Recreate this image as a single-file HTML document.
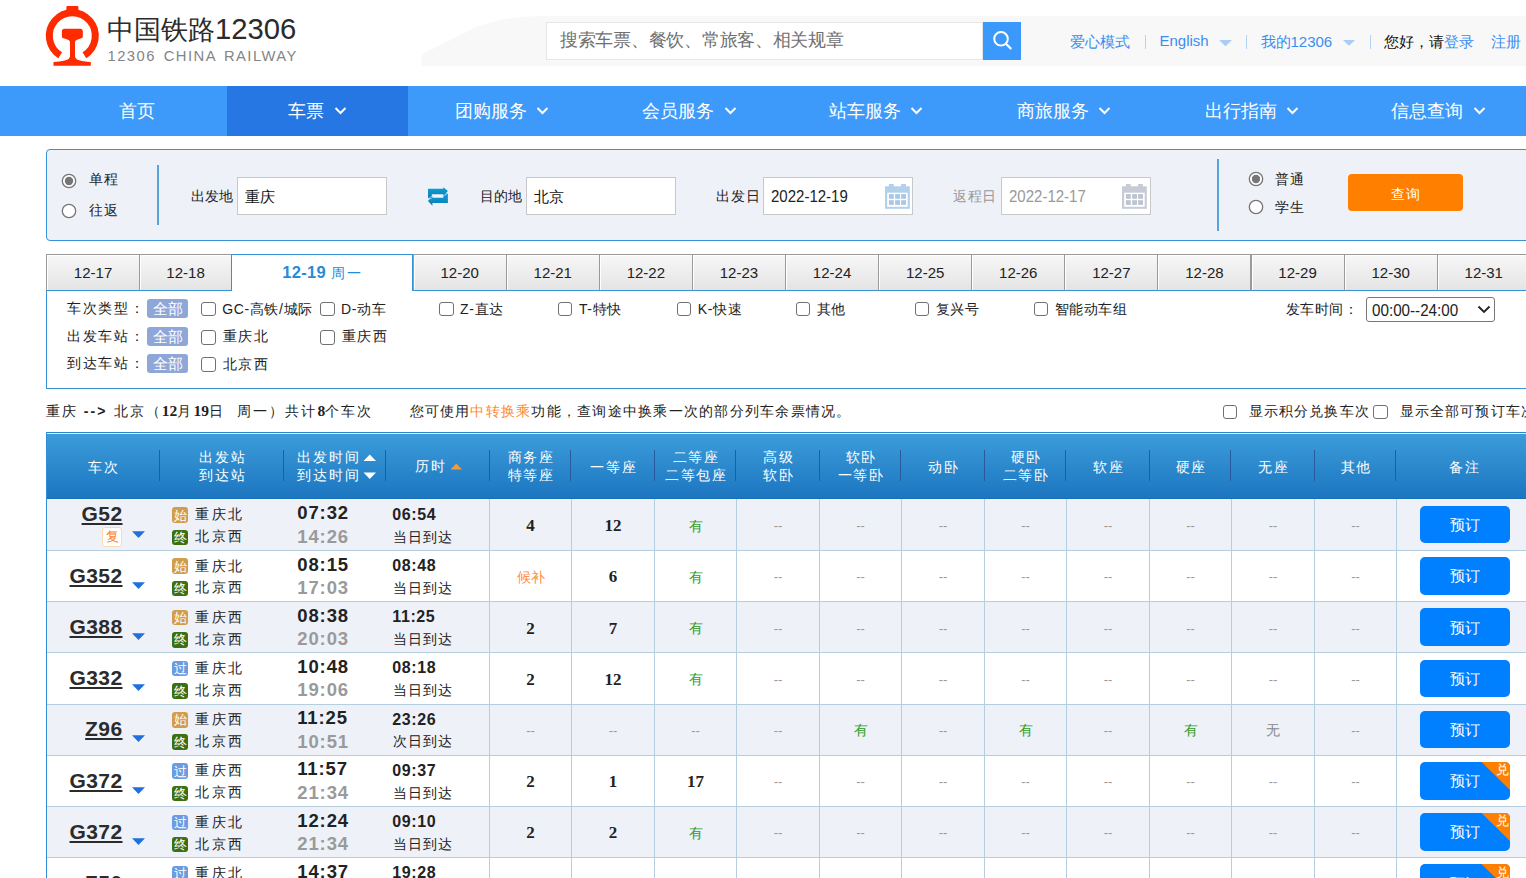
<!DOCTYPE html><html><head><meta charset="utf-8"><style>
html,body{margin:0;padding:0;background:#fff;}
body{width:1526px;height:878px;position:relative;overflow:hidden;font-family:"Liberation Sans",sans-serif;}
.t{position:absolute;white-space:nowrap;}
.b{position:absolute;box-sizing:border-box;}
.sb{font-family:'Liberation Serif',serif;font-size:15.5px;letter-spacing:0;}
svg{position:absolute;}
</style></head><body>
<svg style="left:40px;top:0px" width="64" height="70" viewBox="40 0 64 70">
<path d="M 60.2 55.2 A 23 23 0 1 1 84.4 55.2" fill="none" stroke="#fe2a00" stroke-width="7"/>
<rect x="66.4" y="6" width="12" height="6" rx="1" fill="#fe2a00"/>
<path d="M 64.5 28.7 H 80.3 Q 82.8 28.7 82.8 31.2 V 36.8 Q 82.8 38.2 80.5 38.6 Q 75.5 39.8 75 42 V 56.5 Q 75.5 60 82 61 Q 88 62 90.8 62 V 65.8 H 53.5 V 62 Q 56.5 62 62.5 61 Q 69.5 60 70 56.5 V 42 Q 69.5 39.8 64.5 38.6 Q 61.9 38.2 61.9 36.8 V 31.2 Q 61.9 28.7 64.5 28.7 Z" fill="#fe2a00"/>
</svg>
<div class="t" style="left:107.0px;top:14.8px;font-size:27px;line-height:27px;color:#2b2b2b;font-weight:normal;letter-spacing:0px;font-family:'Liberation Sans',sans-serif;">中国铁路<span style="font-size:30px;display:inline-block;transform:scaleX(0.975);transform-origin:left center;">12306</span></div>
<div class="t" style="left:107.5px;top:48.6px;font-size:14.8px;line-height:14.8px;color:#858585;font-weight:normal;letter-spacing:1.45px;font-family:'Liberation Sans',sans-serif;word-spacing:2.2px;">12306 CHINA RAILWAY</div>
<svg style="left:0;top:0" width="1526" height="80"><path d="M 421.5 66 L 421 59 Q 421.5 53 431 49.8 L 476 27.3 Q 498 17.5 540 16 L 1526 16 L 1526 66 Z" fill="#f8f8f8"/></svg>
<div class="b" style="left:546.0px;top:22.0px;width:437.0px;height:38.0px;background:#fff;border:1px solid #e6e6e6;"></div>
<div class="t" style="left:560.0px;top:32.2px;font-size:17.5px;line-height:17.5px;color:#707070;font-weight:normal;letter-spacing:-0.27px;font-family:'Liberation Sans',sans-serif;">搜索车票、餐饮、常旅客、相关规章</div>
<div class="b" style="left:983.0px;top:22.0px;width:38.0px;height:38.0px;background:#3b99fc;"></div>
<svg style="left:983px;top:22px" width="38" height="38"><circle cx="18" cy="16.8" r="6.8" fill="none" stroke="#fff" stroke-width="2"/><line x1="22.9" y1="21.7" x2="27.6" y2="26.4" stroke="#fff" stroke-width="2.2" stroke-linecap="round"/></svg>
<div class="t" style="left:1070.0px;top:33.6px;font-size:15px;line-height:15px;color:#3b8ef0;font-weight:normal;letter-spacing:0px;font-family:'Liberation Sans',sans-serif;">爱心模式</div>
<div class="b" style="left:1145.0px;top:35.0px;width:1.2px;height:13.6px;background:#b4d3f6;"></div>
<div class="t" style="left:1159.5px;top:32.6px;font-size:15px;line-height:15px;color:#3b8ef0;font-weight:normal;letter-spacing:0px;font-family:'Liberation Sans',sans-serif;">English</div>
<svg style="left:1219px;top:40px" width="14" height="7"><path d="M0 0 H13 L6.5 6.2 Z" fill="#a9cdf6"/></svg>
<div class="b" style="left:1246.0px;top:35.0px;width:1.2px;height:13.6px;background:#b4d3f6;"></div>
<div class="t" style="left:1260.5px;top:33.6px;font-size:15px;line-height:15px;color:#3b8ef0;font-weight:normal;letter-spacing:0px;font-family:'Liberation Sans',sans-serif;">我的12306</div>
<svg style="left:1343px;top:40px" width="14" height="7"><path d="M0 0 H12 L6 5.8 Z" fill="#a9cdf6"/></svg>
<div class="b" style="left:1370.0px;top:35.0px;width:1.2px;height:13.6px;background:#b4d3f6;"></div>
<div class="t" style="left:1384.0px;top:34.5px;font-size:14.6px;line-height:14.6px;color:#111;font-weight:normal;letter-spacing:0px;font-family:'Liberation Sans',sans-serif;">您好，请<span style="color:#3b8ef0">登录</span></div>
<div class="t" style="left:1490.5px;top:34.5px;font-size:14.6px;line-height:14.6px;color:#3b8ef0;font-weight:normal;letter-spacing:0px;font-family:'Liberation Sans',sans-serif;">注册</div>
<div class="b" style="left:0.0px;top:86.0px;width:1526.0px;height:50.0px;background:#3d9afa;"></div>
<div class="b" style="left:227.0px;top:86.0px;width:181.0px;height:50.0px;background:#2676e3;"></div>
<div class="t" style="left:119.4px;top:101.7px;font-size:18px;line-height:18px;color:#fff;font-weight:normal;letter-spacing:0px;font-family:'Liberation Sans',sans-serif;">首页</div>
<div class="t" style="left:288.1px;top:101.7px;font-size:18px;line-height:18px;color:#fff;font-weight:normal;letter-spacing:0px;font-family:'Liberation Sans',sans-serif;">车票</div>
<svg style="left:334.1px;top:106px" width="14" height="10"><path d="M1.5 2 L6.5 7 L11.5 2" fill="none" stroke="#fff" stroke-width="2"/></svg>
<div class="t" style="left:454.6px;top:101.7px;font-size:18px;line-height:18px;color:#fff;font-weight:normal;letter-spacing:0px;font-family:'Liberation Sans',sans-serif;">团购服务</div>
<svg style="left:535.8px;top:106px" width="14" height="10"><path d="M1.5 2 L6.5 7 L11.5 2" fill="none" stroke="#fff" stroke-width="2"/></svg>
<div class="t" style="left:642.3px;top:101.7px;font-size:18px;line-height:18px;color:#fff;font-weight:normal;letter-spacing:0px;font-family:'Liberation Sans',sans-serif;">会员服务</div>
<svg style="left:723.5px;top:106px" width="14" height="10"><path d="M1.5 2 L6.5 7 L11.5 2" fill="none" stroke="#fff" stroke-width="2"/></svg>
<div class="t" style="left:829.1px;top:101.7px;font-size:18px;line-height:18px;color:#fff;font-weight:normal;letter-spacing:0px;font-family:'Liberation Sans',sans-serif;">站车服务</div>
<svg style="left:910.3px;top:106px" width="14" height="10"><path d="M1.5 2 L6.5 7 L11.5 2" fill="none" stroke="#fff" stroke-width="2"/></svg>
<div class="t" style="left:1016.7px;top:101.7px;font-size:18px;line-height:18px;color:#fff;font-weight:normal;letter-spacing:0px;font-family:'Liberation Sans',sans-serif;">商旅服务</div>
<svg style="left:1097.9px;top:106px" width="14" height="10"><path d="M1.5 2 L6.5 7 L11.5 2" fill="none" stroke="#fff" stroke-width="2"/></svg>
<div class="t" style="left:1205.2px;top:101.7px;font-size:18px;line-height:18px;color:#fff;font-weight:normal;letter-spacing:0px;font-family:'Liberation Sans',sans-serif;">出行指南</div>
<svg style="left:1286.4px;top:106px" width="14" height="10"><path d="M1.5 2 L6.5 7 L11.5 2" fill="none" stroke="#fff" stroke-width="2"/></svg>
<div class="t" style="left:1391.4px;top:101.7px;font-size:18px;line-height:18px;color:#fff;font-weight:normal;letter-spacing:0px;font-family:'Liberation Sans',sans-serif;">信息查询</div>
<svg style="left:1472.6px;top:106px" width="14" height="10"><path d="M1.5 2 L6.5 7 L11.5 2" fill="none" stroke="#fff" stroke-width="2"/></svg>
<div class="b" style="left:46.0px;top:149.0px;width:1560.0px;height:92.0px;background:#eef1f8;border:1px solid #3592d6;border-radius:4px;"></div>
<svg style="left:61.3px;top:172.5px" width="16" height="16"><circle cx="8" cy="8" r="6.7" fill="#fff" stroke="#767676" stroke-width="1.3"/><circle cx="8" cy="8" r="4.2" fill="#767676"/></svg>
<svg style="left:61.3px;top:202.6px" width="16" height="16"><circle cx="8" cy="8" r="6.7" fill="#fff" stroke="#767676" stroke-width="1.3"/></svg>
<div class="t" style="left:88.5px;top:171.9px;font-size:14px;line-height:14px;color:#222;font-weight:normal;letter-spacing:1px;font-family:'Liberation Sans',sans-serif;">单程</div>
<div class="t" style="left:88.5px;top:202.8px;font-size:14px;line-height:14px;color:#222;font-weight:normal;letter-spacing:1px;font-family:'Liberation Sans',sans-serif;">往返</div>
<div class="b" style="left:157.0px;top:165.0px;width:2.0px;height:60.0px;background:#5aa3da;"></div>
<div class="t" style="left:190.5px;top:189.0px;font-size:14px;line-height:14px;color:#222;font-weight:normal;letter-spacing:0.3px;font-family:'Liberation Sans',sans-serif;">出发地</div>
<div class="b" style="left:237.0px;top:177.0px;width:150.0px;height:38.0px;background:#fff;border:1px solid #c8c8c8;"></div>
<div class="t" style="left:244.5px;top:188.6px;font-size:15px;line-height:15px;color:#111;font-weight:normal;letter-spacing:0px;font-family:'Liberation Sans',sans-serif;">重庆</div>
<svg style="left:427px;top:186px" width="22" height="21" viewBox="0 0 22 21"><defs><linearGradient id="sg" x1="0" y1="0" x2="0" y2="1"><stop offset="0" stop-color="#0aa0d8"/><stop offset="1" stop-color="#0b7db3"/></defs>
<path d="M1 2.8 H16.4 V1.2 L20.9 5.1 L16.4 9.8 V8.3 H4.8 V12.6 L1 12.6 Z" fill="url(#sg)"/>
<path d="M20.9 16.9 H5.4 V19.7 L0.9 14.9 L5.4 10.2 V11.8 H16.4 V7.3 L20.9 7.3 Z" fill="url(#sg)"/>
<path d="M16.4 9.8 L20.9 7.3" stroke="#eef1f8" stroke-width="0.6"/><path d="M4.8 12.6 L1 12.6 L5.4 10.2" fill="none" stroke="#eef1f8" stroke-width="0.5"/></svg>
<div class="t" style="left:479.5px;top:188.5px;font-size:14px;line-height:14px;color:#222;font-weight:normal;letter-spacing:0.3px;font-family:'Liberation Sans',sans-serif;">目的地</div>
<div class="b" style="left:526.0px;top:177.0px;width:150.0px;height:38.0px;background:#fff;border:1px solid #c8c8c8;"></div>
<div class="t" style="left:533.5px;top:188.6px;font-size:15px;line-height:15px;color:#111;font-weight:normal;letter-spacing:0px;font-family:'Liberation Sans',sans-serif;">北京</div>
<div class="t" style="left:716.0px;top:188.8px;font-size:14px;line-height:14px;color:#222;font-weight:normal;letter-spacing:0.9px;font-family:'Liberation Sans',sans-serif;">出发日</div>
<div class="b" style="left:763.0px;top:177.0px;width:150.0px;height:38.0px;background:#fff;border:1px solid #c8c8c8;"></div>
<div class="t" style="left:770.5px;top:188.2px;font-size:16.5px;line-height:16.5px;color:#222;font-weight:normal;letter-spacing:0px;font-family:'Liberation Sans',sans-serif;transform:scaleX(0.91);transform-origin:left center;">2022-12-19</div>
<svg style="left:885px;top:184px" width="25" height="25"><rect x="0" y="2.3" width="24.8" height="22.5" fill="#b1d0ec"/><rect x="3.9" y="0" width="4.8" height="3" fill="#b1d0ec"/><rect x="16.1" y="0" width="4.8" height="3" fill="#b1d0ec"/>
<rect x="2.2" y="8.7" width="20.5" height="14.1" fill="#fff"/><g fill="#a9c8e5"><rect x="3.9" y="10.1" width="4.9" height="4.7"/><rect x="10.1" y="10.1" width="4.9" height="4.7"/><rect x="16.1" y="10.1" width="4.9" height="4.7"/><rect x="3.9" y="16.2" width="4.9" height="4.7"/><rect x="10.1" y="16.2" width="4.9" height="4.7"/><rect x="16.1" y="16.2" width="4.9" height="4.7"/></g></svg>
<div class="t" style="left:953.0px;top:188.8px;font-size:14px;line-height:14px;color:#999;font-weight:normal;letter-spacing:0.6px;font-family:'Liberation Sans',sans-serif;">返程日</div>
<div class="b" style="left:1001.0px;top:177.0px;width:150.0px;height:38.0px;background:#fff;border:1px solid #c8c8c8;"></div>
<div class="t" style="left:1008.5px;top:188.2px;font-size:16.5px;line-height:16.5px;color:#999;font-weight:normal;letter-spacing:0px;font-family:'Liberation Sans',sans-serif;transform:scaleX(0.91);transform-origin:left center;">2022-12-17</div>
<svg style="left:1122px;top:184px" width="25" height="25"><rect x="0" y="2.3" width="24.8" height="22.5" fill="#c6cbd5"/><rect x="3.9" y="0" width="4.8" height="3" fill="#c6cbd5"/><rect x="16.1" y="0" width="4.8" height="3" fill="#c6cbd5"/>
<rect x="2.2" y="8.7" width="20.5" height="14.1" fill="#fff"/><g fill="#bec4cf"><rect x="3.9" y="10.1" width="4.9" height="4.7"/><rect x="10.1" y="10.1" width="4.9" height="4.7"/><rect x="16.1" y="10.1" width="4.9" height="4.7"/><rect x="3.9" y="16.2" width="4.9" height="4.7"/><rect x="10.1" y="16.2" width="4.9" height="4.7"/><rect x="16.1" y="16.2" width="4.9" height="4.7"/></g></svg>
<div class="b" style="left:1217.0px;top:159.0px;width:2.0px;height:72.0px;background:#5aa3da;"></div>
<svg style="left:1247.9px;top:170.5px" width="16" height="16"><circle cx="8" cy="8" r="6.7" fill="#fff" stroke="#767676" stroke-width="1.3"/><circle cx="8" cy="8" r="4.2" fill="#767676"/></svg>
<svg style="left:1247.9px;top:199.4px" width="16" height="16"><circle cx="8" cy="8" r="6.7" fill="#fff" stroke="#767676" stroke-width="1.3"/></svg>
<div class="t" style="left:1274.5px;top:172.2px;font-size:14px;line-height:14px;color:#222;font-weight:normal;letter-spacing:1px;font-family:'Liberation Sans',sans-serif;">普通</div>
<div class="t" style="left:1274.5px;top:200.0px;font-size:14px;line-height:14px;color:#222;font-weight:normal;letter-spacing:1px;font-family:'Liberation Sans',sans-serif;">学生</div>
<div class="b" style="left:1348.0px;top:174.0px;width:115.0px;height:37.0px;background:#ff7f00;border-radius:4px;"></div>
<div class="t" style="left:1305.5px;width:200px;text-align:center;top:186.6px;font-size:14px;line-height:14px;color:#fff;font-weight:normal;letter-spacing:0.3px;text-indent:0.3px;font-family:'Liberation Sans',sans-serif;">查询</div>
<div class="b" style="left:46px;top:290px;width:1500px;height:99px;border:1px solid #3592d6;background:#fff;"></div>
<div class="b" style="left:46.3px;top:254.0px;width:93.5px;height:37.0px;background:linear-gradient(#f7f7f7,#e4e4e4);border:1px solid #9a9a9a;border-bottom:1px solid #3592d6;box-shadow:inset 1px 1px 0 #fff;"></div>
<div class="t" style="left:46.8px;width:92.5px;text-align:center;top:265.2px;font-size:15px;line-height:15px;color:#222;font-weight:normal;letter-spacing:0px;text-indent:0px;font-family:'Liberation Sans',sans-serif;">12-17</div>
<div class="b" style="left:138.8px;top:254.0px;width:93.5px;height:37.0px;background:linear-gradient(#f7f7f7,#e4e4e4);border:1px solid #9a9a9a;border-bottom:1px solid #3592d6;box-shadow:inset 1px 1px 0 #fff;"></div>
<div class="t" style="left:139.3px;width:92.5px;text-align:center;top:265.2px;font-size:15px;line-height:15px;color:#222;font-weight:normal;letter-spacing:0px;text-indent:0px;font-family:'Liberation Sans',sans-serif;">12-18</div>
<div class="b" style="left:231.3px;top:254.0px;width:181.3px;height:37.0px;background:#fff;border:1px solid #3592d6;border-bottom:none;"></div>
<div class="t" style="left:232.0px;width:181.3px;top:262.5px;text-align:center;font-size:16.5px;line-height:18px;color:#2a8ad6;"><b style="letter-spacing:0.3px">12-19</b> <span style="font-size:14px;letter-spacing:2.2px">周一</span></div>
<div class="b" style="left:412.6px;top:254.0px;width:94.1px;height:37.0px;background:linear-gradient(#f7f7f7,#e4e4e4);border:1px solid #9a9a9a;border-bottom:1px solid #3592d6;box-shadow:inset 1px 1px 0 #fff;"></div>
<div class="t" style="left:413.1px;width:93.1px;text-align:center;top:265.2px;font-size:15px;line-height:15px;color:#222;font-weight:normal;letter-spacing:0px;text-indent:0px;font-family:'Liberation Sans',sans-serif;">12-20</div>
<div class="b" style="left:505.7px;top:254.0px;width:94.1px;height:37.0px;background:linear-gradient(#f7f7f7,#e4e4e4);border:1px solid #9a9a9a;border-bottom:1px solid #3592d6;box-shadow:inset 1px 1px 0 #fff;"></div>
<div class="t" style="left:506.2px;width:93.1px;text-align:center;top:265.2px;font-size:15px;line-height:15px;color:#222;font-weight:normal;letter-spacing:0px;text-indent:0px;font-family:'Liberation Sans',sans-serif;">12-21</div>
<div class="b" style="left:598.8px;top:254.0px;width:94.1px;height:37.0px;background:linear-gradient(#f7f7f7,#e4e4e4);border:1px solid #9a9a9a;border-bottom:1px solid #3592d6;box-shadow:inset 1px 1px 0 #fff;"></div>
<div class="t" style="left:599.3px;width:93.1px;text-align:center;top:265.2px;font-size:15px;line-height:15px;color:#222;font-weight:normal;letter-spacing:0px;text-indent:0px;font-family:'Liberation Sans',sans-serif;">12-22</div>
<div class="b" style="left:691.9px;top:254.0px;width:94.1px;height:37.0px;background:linear-gradient(#f7f7f7,#e4e4e4);border:1px solid #9a9a9a;border-bottom:1px solid #3592d6;box-shadow:inset 1px 1px 0 #fff;"></div>
<div class="t" style="left:692.4px;width:93.1px;text-align:center;top:265.2px;font-size:15px;line-height:15px;color:#222;font-weight:normal;letter-spacing:0px;text-indent:0px;font-family:'Liberation Sans',sans-serif;">12-23</div>
<div class="b" style="left:785.0px;top:254.0px;width:94.1px;height:37.0px;background:linear-gradient(#f7f7f7,#e4e4e4);border:1px solid #9a9a9a;border-bottom:1px solid #3592d6;box-shadow:inset 1px 1px 0 #fff;"></div>
<div class="t" style="left:785.5px;width:93.1px;text-align:center;top:265.2px;font-size:15px;line-height:15px;color:#222;font-weight:normal;letter-spacing:0px;text-indent:0px;font-family:'Liberation Sans',sans-serif;">12-24</div>
<div class="b" style="left:878.1px;top:254.0px;width:94.1px;height:37.0px;background:linear-gradient(#f7f7f7,#e4e4e4);border:1px solid #9a9a9a;border-bottom:1px solid #3592d6;box-shadow:inset 1px 1px 0 #fff;"></div>
<div class="t" style="left:878.6px;width:93.1px;text-align:center;top:265.2px;font-size:15px;line-height:15px;color:#222;font-weight:normal;letter-spacing:0px;text-indent:0px;font-family:'Liberation Sans',sans-serif;">12-25</div>
<div class="b" style="left:971.2px;top:254.0px;width:94.1px;height:37.0px;background:linear-gradient(#f7f7f7,#e4e4e4);border:1px solid #9a9a9a;border-bottom:1px solid #3592d6;box-shadow:inset 1px 1px 0 #fff;"></div>
<div class="t" style="left:971.7px;width:93.1px;text-align:center;top:265.2px;font-size:15px;line-height:15px;color:#222;font-weight:normal;letter-spacing:0px;text-indent:0px;font-family:'Liberation Sans',sans-serif;">12-26</div>
<div class="b" style="left:1064.3px;top:254.0px;width:94.1px;height:37.0px;background:linear-gradient(#f7f7f7,#e4e4e4);border:1px solid #9a9a9a;border-bottom:1px solid #3592d6;box-shadow:inset 1px 1px 0 #fff;"></div>
<div class="t" style="left:1064.8px;width:93.1px;text-align:center;top:265.2px;font-size:15px;line-height:15px;color:#222;font-weight:normal;letter-spacing:0px;text-indent:0px;font-family:'Liberation Sans',sans-serif;">12-27</div>
<div class="b" style="left:1157.4px;top:254.0px;width:94.1px;height:37.0px;background:linear-gradient(#f7f7f7,#e4e4e4);border:1px solid #9a9a9a;border-bottom:1px solid #3592d6;box-shadow:inset 1px 1px 0 #fff;"></div>
<div class="t" style="left:1157.9px;width:93.1px;text-align:center;top:265.2px;font-size:15px;line-height:15px;color:#222;font-weight:normal;letter-spacing:0px;text-indent:0px;font-family:'Liberation Sans',sans-serif;">12-28</div>
<div class="b" style="left:1250.5px;top:254.0px;width:94.1px;height:37.0px;background:linear-gradient(#f7f7f7,#e4e4e4);border:1px solid #9a9a9a;border-bottom:1px solid #3592d6;box-shadow:inset 1px 1px 0 #fff;"></div>
<div class="t" style="left:1251.0px;width:93.1px;text-align:center;top:265.2px;font-size:15px;line-height:15px;color:#222;font-weight:normal;letter-spacing:0px;text-indent:0px;font-family:'Liberation Sans',sans-serif;">12-29</div>
<div class="b" style="left:1343.6px;top:254.0px;width:94.1px;height:37.0px;background:linear-gradient(#f7f7f7,#e4e4e4);border:1px solid #9a9a9a;border-bottom:1px solid #3592d6;box-shadow:inset 1px 1px 0 #fff;"></div>
<div class="t" style="left:1344.1px;width:93.1px;text-align:center;top:265.2px;font-size:15px;line-height:15px;color:#222;font-weight:normal;letter-spacing:0px;text-indent:0px;font-family:'Liberation Sans',sans-serif;">12-30</div>
<div class="b" style="left:1436.7px;top:254.0px;width:94.1px;height:37.0px;background:linear-gradient(#f7f7f7,#e4e4e4);border:1px solid #9a9a9a;border-bottom:1px solid #3592d6;box-shadow:inset 1px 1px 0 #fff;"></div>
<div class="t" style="left:1437.2px;width:93.1px;text-align:center;top:265.2px;font-size:15px;line-height:15px;color:#222;font-weight:normal;letter-spacing:0px;text-indent:0px;font-family:'Liberation Sans',sans-serif;">12-31</div>
<div class="t" style="left:67.3px;top:301.9px;font-size:13.5px;line-height:13.5px;color:#222;font-weight:normal;letter-spacing:1.6px;font-family:'Liberation Sans',sans-serif;">车次类型：</div>
<div class="b" style="left:147.0px;top:298.9px;width:41.0px;height:19.5px;background:#8ea7d8;border-radius:3px;"></div>
<div class="t" style="left:147.0px;width:41px;text-align:center;top:301.2px;font-size:15px;line-height:15px;color:#fff;font-weight:normal;letter-spacing:0px;text-indent:0px;font-family:'Liberation Sans',sans-serif;">全部</div>
<div class="t" style="left:67.3px;top:329.6px;font-size:13.5px;line-height:13.5px;color:#222;font-weight:normal;letter-spacing:1.6px;font-family:'Liberation Sans',sans-serif;">出发车站：</div>
<div class="b" style="left:147.0px;top:326.5px;width:41.0px;height:19.5px;background:#8ea7d8;border-radius:3px;"></div>
<div class="t" style="left:147.0px;width:41px;text-align:center;top:328.8px;font-size:15px;line-height:15px;color:#fff;font-weight:normal;letter-spacing:0px;text-indent:0px;font-family:'Liberation Sans',sans-serif;">全部</div>
<div class="t" style="left:67.3px;top:356.9px;font-size:13.5px;line-height:13.5px;color:#222;font-weight:normal;letter-spacing:1.6px;font-family:'Liberation Sans',sans-serif;">到达车站：</div>
<div class="b" style="left:147.0px;top:353.8px;width:41.0px;height:19.5px;background:#8ea7d8;border-radius:3px;"></div>
<div class="t" style="left:147.0px;width:41px;text-align:center;top:356.1px;font-size:15px;line-height:15px;color:#fff;font-weight:normal;letter-spacing:0px;text-indent:0px;font-family:'Liberation Sans',sans-serif;">全部</div>
<div class="b" style="left:201.2px;top:301.7px;width:14.5px;height:14.5px;border:1.4px solid #707070;border-radius:3px;background:#fff;"></div>
<div class="t" style="left:222.2px;top:301.7px;font-size:14px;line-height:14px;color:#222;font-weight:normal;letter-spacing:0.65px;font-family:'Liberation Sans',sans-serif;">GC-高铁/城际</div>
<div class="b" style="left:320.1px;top:301.7px;width:14.5px;height:14.5px;border:1.4px solid #707070;border-radius:3px;background:#fff;"></div>
<div class="t" style="left:341.1px;top:301.7px;font-size:14px;line-height:14px;color:#222;font-weight:normal;letter-spacing:0.65px;font-family:'Liberation Sans',sans-serif;">D-动车</div>
<div class="b" style="left:439.0px;top:301.7px;width:14.5px;height:14.5px;border:1.4px solid #707070;border-radius:3px;background:#fff;"></div>
<div class="t" style="left:460.0px;top:301.7px;font-size:14px;line-height:14px;color:#222;font-weight:normal;letter-spacing:0.65px;font-family:'Liberation Sans',sans-serif;">Z-直达</div>
<div class="b" style="left:557.9px;top:301.7px;width:14.5px;height:14.5px;border:1.4px solid #707070;border-radius:3px;background:#fff;"></div>
<div class="t" style="left:578.9px;top:301.7px;font-size:14px;line-height:14px;color:#222;font-weight:normal;letter-spacing:0.65px;font-family:'Liberation Sans',sans-serif;">T-特快</div>
<div class="b" style="left:676.8px;top:301.7px;width:14.5px;height:14.5px;border:1.4px solid #707070;border-radius:3px;background:#fff;"></div>
<div class="t" style="left:697.8px;top:301.7px;font-size:14px;line-height:14px;color:#222;font-weight:normal;letter-spacing:0.65px;font-family:'Liberation Sans',sans-serif;">K-快速</div>
<div class="b" style="left:795.7px;top:301.7px;width:14.5px;height:14.5px;border:1.4px solid #707070;border-radius:3px;background:#fff;"></div>
<div class="t" style="left:816.7px;top:301.7px;font-size:14px;line-height:14px;color:#222;font-weight:normal;letter-spacing:0.65px;font-family:'Liberation Sans',sans-serif;">其他</div>
<div class="b" style="left:914.6px;top:301.7px;width:14.5px;height:14.5px;border:1.4px solid #707070;border-radius:3px;background:#fff;"></div>
<div class="t" style="left:935.6px;top:301.7px;font-size:14px;line-height:14px;color:#222;font-weight:normal;letter-spacing:0.65px;font-family:'Liberation Sans',sans-serif;">复兴号</div>
<div class="b" style="left:1033.5px;top:301.7px;width:14.5px;height:14.5px;border:1.4px solid #707070;border-radius:3px;background:#fff;"></div>
<div class="t" style="left:1054.5px;top:301.7px;font-size:14px;line-height:14px;color:#222;font-weight:normal;letter-spacing:0.65px;font-family:'Liberation Sans',sans-serif;">智能动车组</div>
<div class="b" style="left:201.2px;top:330.0px;width:14.5px;height:14.5px;border:1.4px solid #707070;border-radius:3px;background:#fff;"></div>
<div class="t" style="left:222.7px;top:329.3px;font-size:14px;line-height:14px;color:#222;font-weight:normal;letter-spacing:1.5px;font-family:'Liberation Sans',sans-serif;">重庆北</div>
<div class="b" style="left:320.1px;top:330.0px;width:14.5px;height:14.5px;border:1.4px solid #707070;border-radius:3px;background:#fff;"></div>
<div class="t" style="left:341.6px;top:329.3px;font-size:14px;line-height:14px;color:#222;font-weight:normal;letter-spacing:1.5px;font-family:'Liberation Sans',sans-serif;">重庆西</div>
<div class="b" style="left:201.2px;top:357.3px;width:14.5px;height:14.5px;border:1.4px solid #707070;border-radius:3px;background:#fff;"></div>
<div class="t" style="left:222.7px;top:356.6px;font-size:14px;line-height:14px;color:#222;font-weight:normal;letter-spacing:1.5px;font-family:'Liberation Sans',sans-serif;">北京西</div>
<div class="t" style="left:1285.5px;top:301.9px;font-size:14px;line-height:14px;color:#222;font-weight:normal;letter-spacing:0.6px;font-family:'Liberation Sans',sans-serif;">发车时间：</div>
<div class="b" style="left:1366.0px;top:297.0px;width:129.0px;height:25.0px;border:1px solid #767676;border-radius:3px;background:#fff;"></div>
<div class="t" style="left:1371.5px;top:303.2px;font-size:16px;line-height:16px;color:#222;font-weight:normal;letter-spacing:0px;font-family:'Liberation Sans',sans-serif;transform:scaleX(0.95);transform-origin:left center;">00:00--24:00</div>
<svg style="left:1477px;top:305px" width="14" height="9"><path d="M1.5 1.5 L7 7 L12.5 1.5" fill="none" stroke="#222" stroke-width="1.8"/></svg>
<div class="t" style="left:45.5px;top:403.8px;font-size:14px;line-height:14px;color:#222;font-weight:normal;letter-spacing:2.1px;font-family:'Liberation Sans',sans-serif;">重庆 <b>--&gt;</b> 北京（<b class="sb">12</b>月<b class="sb">19</b>日&nbsp; 周一）共计<b class="sb">8</b>个车次</div>
<div class="t" style="left:409.5px;top:403.8px;font-size:14px;line-height:14px;color:#222;font-weight:normal;letter-spacing:1.24px;font-family:'Liberation Sans',sans-serif;">您可使用<span style="color:#ff8a2a">中转换乘</span>功能，查询途中换乘一次的部分列车余票情况。</div>
<div class="b" style="left:1222.5px;top:404.5px;width:14.5px;height:14.5px;border:1.4px solid #707070;border-radius:3px;background:#fff;"></div>
<div class="t" style="left:1248.5px;top:403.8px;font-size:14px;line-height:14px;color:#222;font-weight:normal;letter-spacing:1.2px;font-family:'Liberation Sans',sans-serif;">显示积分兑换车次</div>
<div class="b" style="left:1373.0px;top:404.5px;width:14.5px;height:14.5px;border:1.4px solid #707070;border-radius:3px;background:#fff;"></div>
<div class="t" style="left:1399.5px;top:403.8px;font-size:14px;line-height:14px;color:#222;font-weight:normal;letter-spacing:1.2px;font-family:'Liberation Sans',sans-serif;">显示全部可预订车次</div>
<div class="b" style="left:46.0px;top:432.0px;width:1500.0px;height:67.0px;background:linear-gradient(#3c9dda,#1b75c0);border-top:1px solid #2d86cc;box-shadow:inset 0 1px 0 #d9ecf8, inset 0 -1px 0 #176fb6;"></div>
<div class="b" style="left:46.0px;top:432.0px;width:1.0px;height:446.0px;background:#2f8fd8;"></div>
<div class="b" style="left:159.0px;top:450.0px;width:1.0px;height:30.5px;background:#2a5a9e;"></div>
<div class="b" style="left:283.0px;top:450.0px;width:1.0px;height:30.5px;background:#2a5a9e;"></div>
<div class="b" style="left:385.0px;top:450.0px;width:1.0px;height:30.5px;background:#2a5a9e;"></div>
<div class="b" style="left:489.0px;top:450.0px;width:1.0px;height:30.5px;background:#2a5a9e;"></div>
<div class="b" style="left:570.0px;top:450.0px;width:1.0px;height:30.5px;background:#2a5a9e;"></div>
<div class="b" style="left:654.0px;top:450.0px;width:1.0px;height:30.5px;background:#2a5a9e;"></div>
<div class="b" style="left:735.0px;top:450.0px;width:1.0px;height:30.5px;background:#2a5a9e;"></div>
<div class="b" style="left:819.0px;top:450.0px;width:1.0px;height:30.5px;background:#2a5a9e;"></div>
<div class="b" style="left:900.0px;top:450.0px;width:1.0px;height:30.5px;background:#2a5a9e;"></div>
<div class="b" style="left:984.0px;top:450.0px;width:1.0px;height:30.5px;background:#2a5a9e;"></div>
<div class="b" style="left:1065.0px;top:450.0px;width:1.0px;height:30.5px;background:#2a5a9e;"></div>
<div class="b" style="left:1149.0px;top:450.0px;width:1.0px;height:30.5px;background:#2a5a9e;"></div>
<div class="b" style="left:1230.0px;top:450.0px;width:1.0px;height:30.5px;background:#2a5a9e;"></div>
<div class="b" style="left:1314.0px;top:450.0px;width:1.0px;height:30.5px;background:#2a5a9e;"></div>
<div class="b" style="left:1395.0px;top:450.0px;width:1.0px;height:30.5px;background:#2a5a9e;"></div>
<div class="t" style="left:53.0px;width:100px;text-align:center;top:460.8px;font-size:13.5px;line-height:13.5px;color:#fff;font-weight:normal;letter-spacing:2.2px;text-indent:2.2px;font-family:'Liberation Sans',sans-serif;">车次</div>
<div class="t" style="left:161.8px;width:120px;text-align:center;top:451.1px;font-size:13.5px;line-height:13.5px;color:#fff;font-weight:normal;letter-spacing:2.0px;text-indent:2.0px;font-family:'Liberation Sans',sans-serif;">出发站</div>
<div class="t" style="left:161.8px;width:120px;text-align:center;top:468.8px;font-size:13.5px;line-height:13.5px;color:#fff;font-weight:normal;letter-spacing:2.0px;text-indent:2.0px;font-family:'Liberation Sans',sans-serif;">到达站</div>
<div class="t" style="left:296.8px;top:451.1px;font-size:13.5px;line-height:13.5px;color:#fff;font-weight:normal;letter-spacing:2.2px;font-family:'Liberation Sans',sans-serif;">出发时间</div>
<div class="t" style="left:296.8px;top:468.8px;font-size:13.5px;line-height:13.5px;color:#fff;font-weight:normal;letter-spacing:2.2px;font-family:'Liberation Sans',sans-serif;">到达时间</div>
<svg style="left:362.5px;top:453.5px" width="14" height="8"><path d="M0.5 7 L6.8 0.5 L13 7 Z" fill="#fff"/></svg>
<svg style="left:362.5px;top:471.5px" width="14" height="8"><path d="M0.5 0.5 L6.8 7 L13 0.5 Z" fill="#fff"/></svg>
<div class="t" style="left:415.0px;top:459.8px;font-size:13.5px;line-height:13.5px;color:#fff;font-weight:normal;letter-spacing:2.2px;font-family:'Liberation Sans',sans-serif;">历时</div>
<svg style="left:449.5px;top:462.5px" width="13" height="7"><path d="M0.5 6.5 L6.3 0.5 L12 6.5 Z" fill="#f39a3d"/></svg>
<div class="t" style="left:470.5px;width:120px;text-align:center;top:451.1px;font-size:13.5px;line-height:13.5px;color:#fff;font-weight:normal;letter-spacing:1.6px;text-indent:1.6px;font-family:'Liberation Sans',sans-serif;">商务座</div>
<div class="t" style="left:470.5px;width:120px;text-align:center;top:468.8px;font-size:13.5px;line-height:13.5px;color:#fff;font-weight:normal;letter-spacing:1.6px;text-indent:1.6px;font-family:'Liberation Sans',sans-serif;">特等座</div>
<div class="t" style="left:573.0px;width:80px;text-align:center;top:460.8px;font-size:13.5px;line-height:13.5px;color:#fff;font-weight:normal;letter-spacing:1.6px;text-indent:1.6px;font-family:'Liberation Sans',sans-serif;">一等座</div>
<div class="t" style="left:635.5px;width:120px;text-align:center;top:451.1px;font-size:13.5px;line-height:13.5px;color:#fff;font-weight:normal;letter-spacing:1.6px;text-indent:1.6px;font-family:'Liberation Sans',sans-serif;">二等座</div>
<div class="t" style="left:635.5px;width:120px;text-align:center;top:468.8px;font-size:13.5px;line-height:13.5px;color:#fff;font-weight:normal;letter-spacing:1.6px;text-indent:1.6px;font-family:'Liberation Sans',sans-serif;">二等包座</div>
<div class="t" style="left:718.0px;width:120px;text-align:center;top:451.1px;font-size:13.5px;line-height:13.5px;color:#fff;font-weight:normal;letter-spacing:1.6px;text-indent:1.6px;font-family:'Liberation Sans',sans-serif;">高级</div>
<div class="t" style="left:718.0px;width:120px;text-align:center;top:468.8px;font-size:13.5px;line-height:13.5px;color:#fff;font-weight:normal;letter-spacing:1.6px;text-indent:1.6px;font-family:'Liberation Sans',sans-serif;">软卧</div>
<div class="t" style="left:800.5px;width:120px;text-align:center;top:451.1px;font-size:13.5px;line-height:13.5px;color:#fff;font-weight:normal;letter-spacing:1.6px;text-indent:1.6px;font-family:'Liberation Sans',sans-serif;">软卧</div>
<div class="t" style="left:800.5px;width:120px;text-align:center;top:468.8px;font-size:13.5px;line-height:13.5px;color:#fff;font-weight:normal;letter-spacing:1.6px;text-indent:1.6px;font-family:'Liberation Sans',sans-serif;">一等卧</div>
<div class="t" style="left:903.0px;width:80px;text-align:center;top:460.8px;font-size:13.5px;line-height:13.5px;color:#fff;font-weight:normal;letter-spacing:1.6px;text-indent:1.6px;font-family:'Liberation Sans',sans-serif;">动卧</div>
<div class="t" style="left:965.5px;width:120px;text-align:center;top:451.1px;font-size:13.5px;line-height:13.5px;color:#fff;font-weight:normal;letter-spacing:1.6px;text-indent:1.6px;font-family:'Liberation Sans',sans-serif;">硬卧</div>
<div class="t" style="left:965.5px;width:120px;text-align:center;top:468.8px;font-size:13.5px;line-height:13.5px;color:#fff;font-weight:normal;letter-spacing:1.6px;text-indent:1.6px;font-family:'Liberation Sans',sans-serif;">二等卧</div>
<div class="t" style="left:1068.0px;width:80px;text-align:center;top:460.8px;font-size:13.5px;line-height:13.5px;color:#fff;font-weight:normal;letter-spacing:1.6px;text-indent:1.6px;font-family:'Liberation Sans',sans-serif;">软座</div>
<div class="t" style="left:1150.5px;width:80px;text-align:center;top:460.8px;font-size:13.5px;line-height:13.5px;color:#fff;font-weight:normal;letter-spacing:1.6px;text-indent:1.6px;font-family:'Liberation Sans',sans-serif;">硬座</div>
<div class="t" style="left:1233.0px;width:80px;text-align:center;top:460.8px;font-size:13.5px;line-height:13.5px;color:#fff;font-weight:normal;letter-spacing:1.6px;text-indent:1.6px;font-family:'Liberation Sans',sans-serif;">无座</div>
<div class="t" style="left:1315.5px;width:80px;text-align:center;top:460.8px;font-size:13.5px;line-height:13.5px;color:#fff;font-weight:normal;letter-spacing:1.6px;text-indent:1.6px;font-family:'Liberation Sans',sans-serif;">其他</div>
<div class="t" style="left:1424.0px;width:80px;text-align:center;top:460.8px;font-size:13.5px;line-height:13.5px;color:#fff;font-weight:normal;letter-spacing:2.2px;text-indent:2.2px;font-family:'Liberation Sans',sans-serif;">备注</div>
<div class="b" style="left:47.0px;top:499.0px;width:1500.0px;height:51.0px;background:#eef1f8;"></div>
<div class="b" style="left:47.0px;top:550.0px;width:1500.0px;height:1.0px;background:#b5cfe0;"></div>
<div class="b" style="left:489.0px;top:499.0px;width:1.0px;height:52.0px;background:#b5cfe0;"></div>
<div class="b" style="left:571.0px;top:499.0px;width:1.0px;height:52.0px;background:#b5cfe0;"></div>
<div class="b" style="left:654.0px;top:499.0px;width:1.0px;height:52.0px;background:#b5cfe0;"></div>
<div class="b" style="left:736.0px;top:499.0px;width:1.0px;height:52.0px;background:#b5cfe0;"></div>
<div class="b" style="left:819.0px;top:499.0px;width:1.0px;height:52.0px;background:#b5cfe0;"></div>
<div class="b" style="left:901.0px;top:499.0px;width:1.0px;height:52.0px;background:#b5cfe0;"></div>
<div class="b" style="left:984.0px;top:499.0px;width:1.0px;height:52.0px;background:#b5cfe0;"></div>
<div class="b" style="left:1066.0px;top:499.0px;width:1.0px;height:52.0px;background:#b5cfe0;"></div>
<div class="b" style="left:1149.0px;top:499.0px;width:1.0px;height:52.0px;background:#b5cfe0;"></div>
<div class="b" style="left:1231.0px;top:499.0px;width:1.0px;height:52.0px;background:#b5cfe0;"></div>
<div class="b" style="left:1314.0px;top:499.0px;width:1.0px;height:52.0px;background:#b5cfe0;"></div>
<div class="b" style="left:1396.0px;top:499.0px;width:1.0px;height:52.0px;background:#b5cfe0;"></div>
<div class="t" style="left:-77.5px;width:200px;text-align:right;top:502.8px;font-size:21px;line-height:21px;font-weight:bold;color:#2b2b2b;letter-spacing:0.4px;text-decoration:underline;text-decoration-thickness:2px;text-underline-offset:1.5px;">G52</div>
<div class="b" style="left:102.3px;top:527.0px;width:19.5px;height:19.5px;border:1px solid #fbd9b6;border-radius:3px;background:#fff;"></div>
<div class="t" style="left:102.0px;width:20px;text-align:center;top:530.1px;font-size:13px;line-height:13px;color:#ff7a1a;font-weight:normal;letter-spacing:0px;text-indent:0px;font-family:'Liberation Sans',sans-serif;">复</div>
<svg style="left:132px;top:530.5px" width="14" height="8"><path d="M0 0.3 H13 L6.5 7 Z" fill="#1f6fde"/></svg>
<div class="b" style="left:171.8px;top:507.1px;width:16.5px;height:15.5px;background:#d39c4a;border-radius:3px;"></div>
<div class="t" style="left:171.0px;width:18px;text-align:center;top:508.5px;font-size:13px;line-height:13px;color:#fff;font-weight:normal;letter-spacing:0px;text-indent:0px;font-family:'Liberation Sans',sans-serif;">始</div>
<div class="t" style="left:195.0px;top:508.2px;font-size:13.5px;line-height:13.5px;color:#222;font-weight:normal;letter-spacing:2.6px;font-family:'Liberation Sans',sans-serif;">重庆北</div>
<div class="b" style="left:171.8px;top:529.5px;width:16.5px;height:15.5px;background:#3d6f10;border-radius:3px;"></div>
<div class="t" style="left:171.0px;width:18px;text-align:center;top:530.9px;font-size:13px;line-height:13px;color:#fff;font-weight:normal;letter-spacing:0px;text-indent:0px;font-family:'Liberation Sans',sans-serif;">终</div>
<div class="t" style="left:195.0px;top:530.1px;font-size:13.5px;line-height:13.5px;color:#222;font-weight:normal;letter-spacing:2.6px;font-family:'Liberation Sans',sans-serif;">北京西</div>
<div class="t" style="left:297.2px;top:504.2px;font-size:18.5px;line-height:18.5px;color:#222;font-weight:bold;letter-spacing:0.9px;font-family:'Liberation Sans',sans-serif;">07:32</div>
<div class="t" style="left:297.2px;top:527.8px;font-size:18.5px;line-height:18.5px;color:#9a9a9a;font-weight:bold;letter-spacing:0.9px;font-family:'Liberation Sans',sans-serif;">14:26</div>
<div class="t" style="left:392.3px;top:506.6px;font-size:16px;line-height:16px;color:#222;font-weight:bold;letter-spacing:0.6px;font-family:'Liberation Sans',sans-serif;">06:54</div>
<div class="t" style="left:393.0px;top:530.5px;font-size:13.5px;line-height:13.5px;color:#222;font-weight:normal;letter-spacing:1.0px;font-family:'Liberation Sans',sans-serif;">当日到达</div>
<div class="t" style="left:500.5px;width:60px;text-align:center;top:517.0px;font-size:17px;line-height:17px;color:#222;font-weight:bold;letter-spacing:0px;text-indent:0px;font-family:'Liberation Serif',serif;">4</div>
<div class="t" style="left:583.0px;width:60px;text-align:center;top:517.0px;font-size:17px;line-height:17px;color:#222;font-weight:bold;letter-spacing:0px;text-indent:0px;font-family:'Liberation Serif',serif;">12</div>
<div class="t" style="left:665.5px;width:60px;text-align:center;top:518.5px;font-size:14px;line-height:14px;color:#2e9c26;font-weight:normal;letter-spacing:0px;text-indent:0px;font-family:'Liberation Sans',sans-serif;">有</div>
<div class="t" style="left:748.0px;width:60px;text-align:center;top:519.0px;font-size:13px;line-height:13px;color:#9a9a9a;font-weight:normal;letter-spacing:0px;text-indent:0px;font-family:'Liberation Sans',sans-serif;">--</div>
<div class="t" style="left:830.5px;width:60px;text-align:center;top:519.0px;font-size:13px;line-height:13px;color:#9a9a9a;font-weight:normal;letter-spacing:0px;text-indent:0px;font-family:'Liberation Sans',sans-serif;">--</div>
<div class="t" style="left:913.0px;width:60px;text-align:center;top:519.0px;font-size:13px;line-height:13px;color:#9a9a9a;font-weight:normal;letter-spacing:0px;text-indent:0px;font-family:'Liberation Sans',sans-serif;">--</div>
<div class="t" style="left:995.5px;width:60px;text-align:center;top:519.0px;font-size:13px;line-height:13px;color:#9a9a9a;font-weight:normal;letter-spacing:0px;text-indent:0px;font-family:'Liberation Sans',sans-serif;">--</div>
<div class="t" style="left:1078.0px;width:60px;text-align:center;top:519.0px;font-size:13px;line-height:13px;color:#9a9a9a;font-weight:normal;letter-spacing:0px;text-indent:0px;font-family:'Liberation Sans',sans-serif;">--</div>
<div class="t" style="left:1160.5px;width:60px;text-align:center;top:519.0px;font-size:13px;line-height:13px;color:#9a9a9a;font-weight:normal;letter-spacing:0px;text-indent:0px;font-family:'Liberation Sans',sans-serif;">--</div>
<div class="t" style="left:1243.0px;width:60px;text-align:center;top:519.0px;font-size:13px;line-height:13px;color:#9a9a9a;font-weight:normal;letter-spacing:0px;text-indent:0px;font-family:'Liberation Sans',sans-serif;">--</div>
<div class="t" style="left:1325.5px;width:60px;text-align:center;top:519.0px;font-size:13px;line-height:13px;color:#9a9a9a;font-weight:normal;letter-spacing:0px;text-indent:0px;font-family:'Liberation Sans',sans-serif;">--</div>
<div class="b" style="left:1420.0px;top:505.8px;width:90.0px;height:37.7px;background:#0080ff;border-radius:5px;overflow:hidden;"></div>
<div class="t" style="left:1424.6px;width:80px;text-align:center;top:518.0px;font-size:14.5px;line-height:14.5px;color:#fff;font-weight:normal;letter-spacing:0px;text-indent:0px;font-family:'Liberation Sans',sans-serif;">预订</div>
<div class="b" style="left:47.0px;top:551.0px;width:1500.0px;height:50.0px;background:#fff;"></div>
<div class="b" style="left:47.0px;top:601.0px;width:1500.0px;height:1.0px;background:#b5cfe0;"></div>
<div class="b" style="left:489.0px;top:551.0px;width:1.0px;height:51.0px;background:#b5cfe0;"></div>
<div class="b" style="left:571.0px;top:551.0px;width:1.0px;height:51.0px;background:#b5cfe0;"></div>
<div class="b" style="left:654.0px;top:551.0px;width:1.0px;height:51.0px;background:#b5cfe0;"></div>
<div class="b" style="left:736.0px;top:551.0px;width:1.0px;height:51.0px;background:#b5cfe0;"></div>
<div class="b" style="left:819.0px;top:551.0px;width:1.0px;height:51.0px;background:#b5cfe0;"></div>
<div class="b" style="left:901.0px;top:551.0px;width:1.0px;height:51.0px;background:#b5cfe0;"></div>
<div class="b" style="left:984.0px;top:551.0px;width:1.0px;height:51.0px;background:#b5cfe0;"></div>
<div class="b" style="left:1066.0px;top:551.0px;width:1.0px;height:51.0px;background:#b5cfe0;"></div>
<div class="b" style="left:1149.0px;top:551.0px;width:1.0px;height:51.0px;background:#b5cfe0;"></div>
<div class="b" style="left:1231.0px;top:551.0px;width:1.0px;height:51.0px;background:#b5cfe0;"></div>
<div class="b" style="left:1314.0px;top:551.0px;width:1.0px;height:51.0px;background:#b5cfe0;"></div>
<div class="b" style="left:1396.0px;top:551.0px;width:1.0px;height:51.0px;background:#b5cfe0;"></div>
<div class="t" style="left:-77.5px;width:200px;text-align:right;top:564.6px;font-size:21px;line-height:21px;font-weight:bold;color:#2b2b2b;letter-spacing:0.4px;text-decoration:underline;text-decoration-thickness:2px;text-underline-offset:1.5px;">G352</div>
<svg style="left:132px;top:581.7px" width="14" height="8"><path d="M0 0.3 H13 L6.5 7 Z" fill="#1f6fde"/></svg>
<div class="b" style="left:171.8px;top:558.3px;width:16.5px;height:15.5px;background:#d39c4a;border-radius:3px;"></div>
<div class="t" style="left:171.0px;width:18px;text-align:center;top:559.7px;font-size:13px;line-height:13px;color:#fff;font-weight:normal;letter-spacing:0px;text-indent:0px;font-family:'Liberation Sans',sans-serif;">始</div>
<div class="t" style="left:195.0px;top:559.5px;font-size:13.5px;line-height:13.5px;color:#222;font-weight:normal;letter-spacing:2.6px;font-family:'Liberation Sans',sans-serif;">重庆北</div>
<div class="b" style="left:171.8px;top:580.7px;width:16.5px;height:15.5px;background:#3d6f10;border-radius:3px;"></div>
<div class="t" style="left:171.0px;width:18px;text-align:center;top:582.1px;font-size:13px;line-height:13px;color:#fff;font-weight:normal;letter-spacing:0px;text-indent:0px;font-family:'Liberation Sans',sans-serif;">终</div>
<div class="t" style="left:195.0px;top:581.4px;font-size:13.5px;line-height:13.5px;color:#222;font-weight:normal;letter-spacing:2.6px;font-family:'Liberation Sans',sans-serif;">北京西</div>
<div class="t" style="left:297.2px;top:555.5px;font-size:18.5px;line-height:18.5px;color:#222;font-weight:bold;letter-spacing:0.9px;font-family:'Liberation Sans',sans-serif;">08:15</div>
<div class="t" style="left:297.2px;top:579.0px;font-size:18.5px;line-height:18.5px;color:#9a9a9a;font-weight:bold;letter-spacing:0.9px;font-family:'Liberation Sans',sans-serif;">17:03</div>
<div class="t" style="left:392.3px;top:557.8px;font-size:16px;line-height:16px;color:#222;font-weight:bold;letter-spacing:0.6px;font-family:'Liberation Sans',sans-serif;">08:48</div>
<div class="t" style="left:393.0px;top:581.7px;font-size:13.5px;line-height:13.5px;color:#222;font-weight:normal;letter-spacing:1.0px;font-family:'Liberation Sans',sans-serif;">当日到达</div>
<div class="t" style="left:500.5px;width:60px;text-align:center;top:569.7px;font-size:14px;line-height:14px;color:#ff8b3d;font-weight:normal;letter-spacing:0px;text-indent:0px;font-family:'Liberation Sans',sans-serif;">候补</div>
<div class="t" style="left:583.0px;width:60px;text-align:center;top:568.2px;font-size:17px;line-height:17px;color:#222;font-weight:bold;letter-spacing:0px;text-indent:0px;font-family:'Liberation Serif',serif;">6</div>
<div class="t" style="left:665.5px;width:60px;text-align:center;top:569.7px;font-size:14px;line-height:14px;color:#2e9c26;font-weight:normal;letter-spacing:0px;text-indent:0px;font-family:'Liberation Sans',sans-serif;">有</div>
<div class="t" style="left:748.0px;width:60px;text-align:center;top:570.2px;font-size:13px;line-height:13px;color:#9a9a9a;font-weight:normal;letter-spacing:0px;text-indent:0px;font-family:'Liberation Sans',sans-serif;">--</div>
<div class="t" style="left:830.5px;width:60px;text-align:center;top:570.2px;font-size:13px;line-height:13px;color:#9a9a9a;font-weight:normal;letter-spacing:0px;text-indent:0px;font-family:'Liberation Sans',sans-serif;">--</div>
<div class="t" style="left:913.0px;width:60px;text-align:center;top:570.2px;font-size:13px;line-height:13px;color:#9a9a9a;font-weight:normal;letter-spacing:0px;text-indent:0px;font-family:'Liberation Sans',sans-serif;">--</div>
<div class="t" style="left:995.5px;width:60px;text-align:center;top:570.2px;font-size:13px;line-height:13px;color:#9a9a9a;font-weight:normal;letter-spacing:0px;text-indent:0px;font-family:'Liberation Sans',sans-serif;">--</div>
<div class="t" style="left:1078.0px;width:60px;text-align:center;top:570.2px;font-size:13px;line-height:13px;color:#9a9a9a;font-weight:normal;letter-spacing:0px;text-indent:0px;font-family:'Liberation Sans',sans-serif;">--</div>
<div class="t" style="left:1160.5px;width:60px;text-align:center;top:570.2px;font-size:13px;line-height:13px;color:#9a9a9a;font-weight:normal;letter-spacing:0px;text-indent:0px;font-family:'Liberation Sans',sans-serif;">--</div>
<div class="t" style="left:1243.0px;width:60px;text-align:center;top:570.2px;font-size:13px;line-height:13px;color:#9a9a9a;font-weight:normal;letter-spacing:0px;text-indent:0px;font-family:'Liberation Sans',sans-serif;">--</div>
<div class="t" style="left:1325.5px;width:60px;text-align:center;top:570.2px;font-size:13px;line-height:13px;color:#9a9a9a;font-weight:normal;letter-spacing:0px;text-indent:0px;font-family:'Liberation Sans',sans-serif;">--</div>
<div class="b" style="left:1420.0px;top:557.0px;width:90.0px;height:37.7px;background:#0080ff;border-radius:5px;overflow:hidden;"></div>
<div class="t" style="left:1424.6px;width:80px;text-align:center;top:569.3px;font-size:14.5px;line-height:14.5px;color:#fff;font-weight:normal;letter-spacing:0px;text-indent:0px;font-family:'Liberation Sans',sans-serif;">预订</div>
<div class="b" style="left:47.0px;top:602.0px;width:1500.0px;height:50.0px;background:#eef1f8;"></div>
<div class="b" style="left:47.0px;top:652.0px;width:1500.0px;height:1.0px;background:#b5cfe0;"></div>
<div class="b" style="left:489.0px;top:602.0px;width:1.0px;height:51.0px;background:#b5cfe0;"></div>
<div class="b" style="left:571.0px;top:602.0px;width:1.0px;height:51.0px;background:#b5cfe0;"></div>
<div class="b" style="left:654.0px;top:602.0px;width:1.0px;height:51.0px;background:#b5cfe0;"></div>
<div class="b" style="left:736.0px;top:602.0px;width:1.0px;height:51.0px;background:#b5cfe0;"></div>
<div class="b" style="left:819.0px;top:602.0px;width:1.0px;height:51.0px;background:#b5cfe0;"></div>
<div class="b" style="left:901.0px;top:602.0px;width:1.0px;height:51.0px;background:#b5cfe0;"></div>
<div class="b" style="left:984.0px;top:602.0px;width:1.0px;height:51.0px;background:#b5cfe0;"></div>
<div class="b" style="left:1066.0px;top:602.0px;width:1.0px;height:51.0px;background:#b5cfe0;"></div>
<div class="b" style="left:1149.0px;top:602.0px;width:1.0px;height:51.0px;background:#b5cfe0;"></div>
<div class="b" style="left:1231.0px;top:602.0px;width:1.0px;height:51.0px;background:#b5cfe0;"></div>
<div class="b" style="left:1314.0px;top:602.0px;width:1.0px;height:51.0px;background:#b5cfe0;"></div>
<div class="b" style="left:1396.0px;top:602.0px;width:1.0px;height:51.0px;background:#b5cfe0;"></div>
<div class="t" style="left:-77.5px;width:200px;text-align:right;top:615.9px;font-size:21px;line-height:21px;font-weight:bold;color:#2b2b2b;letter-spacing:0.4px;text-decoration:underline;text-decoration-thickness:2px;text-underline-offset:1.5px;">G388</div>
<svg style="left:132px;top:633.0px" width="14" height="8"><path d="M0 0.3 H13 L6.5 7 Z" fill="#1f6fde"/></svg>
<div class="b" style="left:171.8px;top:609.6px;width:16.5px;height:15.5px;background:#d39c4a;border-radius:3px;"></div>
<div class="t" style="left:171.0px;width:18px;text-align:center;top:611.0px;font-size:13px;line-height:13px;color:#fff;font-weight:normal;letter-spacing:0px;text-indent:0px;font-family:'Liberation Sans',sans-serif;">始</div>
<div class="t" style="left:195.0px;top:610.7px;font-size:13.5px;line-height:13.5px;color:#222;font-weight:normal;letter-spacing:2.6px;font-family:'Liberation Sans',sans-serif;">重庆西</div>
<div class="b" style="left:171.8px;top:632.0px;width:16.5px;height:15.5px;background:#3d6f10;border-radius:3px;"></div>
<div class="t" style="left:171.0px;width:18px;text-align:center;top:633.4px;font-size:13px;line-height:13px;color:#fff;font-weight:normal;letter-spacing:0px;text-indent:0px;font-family:'Liberation Sans',sans-serif;">终</div>
<div class="t" style="left:195.0px;top:632.6px;font-size:13.5px;line-height:13.5px;color:#222;font-weight:normal;letter-spacing:2.6px;font-family:'Liberation Sans',sans-serif;">北京西</div>
<div class="t" style="left:297.2px;top:606.7px;font-size:18.5px;line-height:18.5px;color:#222;font-weight:bold;letter-spacing:0.9px;font-family:'Liberation Sans',sans-serif;">08:38</div>
<div class="t" style="left:297.2px;top:630.2px;font-size:18.5px;line-height:18.5px;color:#9a9a9a;font-weight:bold;letter-spacing:0.9px;font-family:'Liberation Sans',sans-serif;">20:03</div>
<div class="t" style="left:392.3px;top:609.1px;font-size:16px;line-height:16px;color:#222;font-weight:bold;letter-spacing:0.6px;font-family:'Liberation Sans',sans-serif;">11:25</div>
<div class="t" style="left:393.0px;top:632.9px;font-size:13.5px;line-height:13.5px;color:#222;font-weight:normal;letter-spacing:1.0px;font-family:'Liberation Sans',sans-serif;">当日到达</div>
<div class="t" style="left:500.5px;width:60px;text-align:center;top:619.5px;font-size:17px;line-height:17px;color:#222;font-weight:bold;letter-spacing:0px;text-indent:0px;font-family:'Liberation Serif',serif;">2</div>
<div class="t" style="left:583.0px;width:60px;text-align:center;top:619.5px;font-size:17px;line-height:17px;color:#222;font-weight:bold;letter-spacing:0px;text-indent:0px;font-family:'Liberation Serif',serif;">7</div>
<div class="t" style="left:665.5px;width:60px;text-align:center;top:621.0px;font-size:14px;line-height:14px;color:#2e9c26;font-weight:normal;letter-spacing:0px;text-indent:0px;font-family:'Liberation Sans',sans-serif;">有</div>
<div class="t" style="left:748.0px;width:60px;text-align:center;top:621.5px;font-size:13px;line-height:13px;color:#9a9a9a;font-weight:normal;letter-spacing:0px;text-indent:0px;font-family:'Liberation Sans',sans-serif;">--</div>
<div class="t" style="left:830.5px;width:60px;text-align:center;top:621.5px;font-size:13px;line-height:13px;color:#9a9a9a;font-weight:normal;letter-spacing:0px;text-indent:0px;font-family:'Liberation Sans',sans-serif;">--</div>
<div class="t" style="left:913.0px;width:60px;text-align:center;top:621.5px;font-size:13px;line-height:13px;color:#9a9a9a;font-weight:normal;letter-spacing:0px;text-indent:0px;font-family:'Liberation Sans',sans-serif;">--</div>
<div class="t" style="left:995.5px;width:60px;text-align:center;top:621.5px;font-size:13px;line-height:13px;color:#9a9a9a;font-weight:normal;letter-spacing:0px;text-indent:0px;font-family:'Liberation Sans',sans-serif;">--</div>
<div class="t" style="left:1078.0px;width:60px;text-align:center;top:621.5px;font-size:13px;line-height:13px;color:#9a9a9a;font-weight:normal;letter-spacing:0px;text-indent:0px;font-family:'Liberation Sans',sans-serif;">--</div>
<div class="t" style="left:1160.5px;width:60px;text-align:center;top:621.5px;font-size:13px;line-height:13px;color:#9a9a9a;font-weight:normal;letter-spacing:0px;text-indent:0px;font-family:'Liberation Sans',sans-serif;">--</div>
<div class="t" style="left:1243.0px;width:60px;text-align:center;top:621.5px;font-size:13px;line-height:13px;color:#9a9a9a;font-weight:normal;letter-spacing:0px;text-indent:0px;font-family:'Liberation Sans',sans-serif;">--</div>
<div class="t" style="left:1325.5px;width:60px;text-align:center;top:621.5px;font-size:13px;line-height:13px;color:#9a9a9a;font-weight:normal;letter-spacing:0px;text-indent:0px;font-family:'Liberation Sans',sans-serif;">--</div>
<div class="b" style="left:1420.0px;top:608.3px;width:90.0px;height:37.7px;background:#0080ff;border-radius:5px;overflow:hidden;"></div>
<div class="t" style="left:1424.6px;width:80px;text-align:center;top:620.5px;font-size:14.5px;line-height:14.5px;color:#fff;font-weight:normal;letter-spacing:0px;text-indent:0px;font-family:'Liberation Sans',sans-serif;">预订</div>
<div class="b" style="left:47.0px;top:653.0px;width:1500.0px;height:51.0px;background:#fff;"></div>
<div class="b" style="left:47.0px;top:704.0px;width:1500.0px;height:1.0px;background:#b5cfe0;"></div>
<div class="b" style="left:489.0px;top:653.0px;width:1.0px;height:52.0px;background:#b5cfe0;"></div>
<div class="b" style="left:571.0px;top:653.0px;width:1.0px;height:52.0px;background:#b5cfe0;"></div>
<div class="b" style="left:654.0px;top:653.0px;width:1.0px;height:52.0px;background:#b5cfe0;"></div>
<div class="b" style="left:736.0px;top:653.0px;width:1.0px;height:52.0px;background:#b5cfe0;"></div>
<div class="b" style="left:819.0px;top:653.0px;width:1.0px;height:52.0px;background:#b5cfe0;"></div>
<div class="b" style="left:901.0px;top:653.0px;width:1.0px;height:52.0px;background:#b5cfe0;"></div>
<div class="b" style="left:984.0px;top:653.0px;width:1.0px;height:52.0px;background:#b5cfe0;"></div>
<div class="b" style="left:1066.0px;top:653.0px;width:1.0px;height:52.0px;background:#b5cfe0;"></div>
<div class="b" style="left:1149.0px;top:653.0px;width:1.0px;height:52.0px;background:#b5cfe0;"></div>
<div class="b" style="left:1231.0px;top:653.0px;width:1.0px;height:52.0px;background:#b5cfe0;"></div>
<div class="b" style="left:1314.0px;top:653.0px;width:1.0px;height:52.0px;background:#b5cfe0;"></div>
<div class="b" style="left:1396.0px;top:653.0px;width:1.0px;height:52.0px;background:#b5cfe0;"></div>
<div class="t" style="left:-77.5px;width:200px;text-align:right;top:667.1px;font-size:21px;line-height:21px;font-weight:bold;color:#2b2b2b;letter-spacing:0.4px;text-decoration:underline;text-decoration-thickness:2px;text-underline-offset:1.5px;">G332</div>
<svg style="left:132px;top:684.2px" width="14" height="8"><path d="M0 0.3 H13 L6.5 7 Z" fill="#1f6fde"/></svg>
<div class="b" style="left:171.8px;top:660.8px;width:16.5px;height:15.5px;background:#6a9ce1;border-radius:3px;"></div>
<div class="t" style="left:171.0px;width:18px;text-align:center;top:662.2px;font-size:13px;line-height:13px;color:#fff;font-weight:normal;letter-spacing:0px;text-indent:0px;font-family:'Liberation Sans',sans-serif;">过</div>
<div class="t" style="left:195.0px;top:661.9px;font-size:13.5px;line-height:13.5px;color:#222;font-weight:normal;letter-spacing:2.6px;font-family:'Liberation Sans',sans-serif;">重庆北</div>
<div class="b" style="left:171.8px;top:683.2px;width:16.5px;height:15.5px;background:#3d6f10;border-radius:3px;"></div>
<div class="t" style="left:171.0px;width:18px;text-align:center;top:684.6px;font-size:13px;line-height:13px;color:#fff;font-weight:normal;letter-spacing:0px;text-indent:0px;font-family:'Liberation Sans',sans-serif;">终</div>
<div class="t" style="left:195.0px;top:683.8px;font-size:13.5px;line-height:13.5px;color:#222;font-weight:normal;letter-spacing:2.6px;font-family:'Liberation Sans',sans-serif;">北京西</div>
<div class="t" style="left:297.2px;top:657.9px;font-size:18.5px;line-height:18.5px;color:#222;font-weight:bold;letter-spacing:0.9px;font-family:'Liberation Sans',sans-serif;">10:48</div>
<div class="t" style="left:297.2px;top:681.4px;font-size:18.5px;line-height:18.5px;color:#9a9a9a;font-weight:bold;letter-spacing:0.9px;font-family:'Liberation Sans',sans-serif;">19:06</div>
<div class="t" style="left:392.3px;top:660.3px;font-size:16px;line-height:16px;color:#222;font-weight:bold;letter-spacing:0.6px;font-family:'Liberation Sans',sans-serif;">08:18</div>
<div class="t" style="left:393.0px;top:684.1px;font-size:13.5px;line-height:13.5px;color:#222;font-weight:normal;letter-spacing:1.0px;font-family:'Liberation Sans',sans-serif;">当日到达</div>
<div class="t" style="left:500.5px;width:60px;text-align:center;top:670.7px;font-size:17px;line-height:17px;color:#222;font-weight:bold;letter-spacing:0px;text-indent:0px;font-family:'Liberation Serif',serif;">2</div>
<div class="t" style="left:583.0px;width:60px;text-align:center;top:670.7px;font-size:17px;line-height:17px;color:#222;font-weight:bold;letter-spacing:0px;text-indent:0px;font-family:'Liberation Serif',serif;">12</div>
<div class="t" style="left:665.5px;width:60px;text-align:center;top:672.2px;font-size:14px;line-height:14px;color:#2e9c26;font-weight:normal;letter-spacing:0px;text-indent:0px;font-family:'Liberation Sans',sans-serif;">有</div>
<div class="t" style="left:748.0px;width:60px;text-align:center;top:672.7px;font-size:13px;line-height:13px;color:#9a9a9a;font-weight:normal;letter-spacing:0px;text-indent:0px;font-family:'Liberation Sans',sans-serif;">--</div>
<div class="t" style="left:830.5px;width:60px;text-align:center;top:672.7px;font-size:13px;line-height:13px;color:#9a9a9a;font-weight:normal;letter-spacing:0px;text-indent:0px;font-family:'Liberation Sans',sans-serif;">--</div>
<div class="t" style="left:913.0px;width:60px;text-align:center;top:672.7px;font-size:13px;line-height:13px;color:#9a9a9a;font-weight:normal;letter-spacing:0px;text-indent:0px;font-family:'Liberation Sans',sans-serif;">--</div>
<div class="t" style="left:995.5px;width:60px;text-align:center;top:672.7px;font-size:13px;line-height:13px;color:#9a9a9a;font-weight:normal;letter-spacing:0px;text-indent:0px;font-family:'Liberation Sans',sans-serif;">--</div>
<div class="t" style="left:1078.0px;width:60px;text-align:center;top:672.7px;font-size:13px;line-height:13px;color:#9a9a9a;font-weight:normal;letter-spacing:0px;text-indent:0px;font-family:'Liberation Sans',sans-serif;">--</div>
<div class="t" style="left:1160.5px;width:60px;text-align:center;top:672.7px;font-size:13px;line-height:13px;color:#9a9a9a;font-weight:normal;letter-spacing:0px;text-indent:0px;font-family:'Liberation Sans',sans-serif;">--</div>
<div class="t" style="left:1243.0px;width:60px;text-align:center;top:672.7px;font-size:13px;line-height:13px;color:#9a9a9a;font-weight:normal;letter-spacing:0px;text-indent:0px;font-family:'Liberation Sans',sans-serif;">--</div>
<div class="t" style="left:1325.5px;width:60px;text-align:center;top:672.7px;font-size:13px;line-height:13px;color:#9a9a9a;font-weight:normal;letter-spacing:0px;text-indent:0px;font-family:'Liberation Sans',sans-serif;">--</div>
<div class="b" style="left:1420.0px;top:659.5px;width:90.0px;height:37.7px;background:#0080ff;border-radius:5px;overflow:hidden;"></div>
<div class="t" style="left:1424.6px;width:80px;text-align:center;top:671.7px;font-size:14.5px;line-height:14.5px;color:#fff;font-weight:normal;letter-spacing:0px;text-indent:0px;font-family:'Liberation Sans',sans-serif;">预订</div>
<div class="b" style="left:47.0px;top:705.0px;width:1500.0px;height:50.0px;background:#eef1f8;"></div>
<div class="b" style="left:47.0px;top:755.0px;width:1500.0px;height:1.0px;background:#b5cfe0;"></div>
<div class="b" style="left:489.0px;top:705.0px;width:1.0px;height:51.0px;background:#b5cfe0;"></div>
<div class="b" style="left:571.0px;top:705.0px;width:1.0px;height:51.0px;background:#b5cfe0;"></div>
<div class="b" style="left:654.0px;top:705.0px;width:1.0px;height:51.0px;background:#b5cfe0;"></div>
<div class="b" style="left:736.0px;top:705.0px;width:1.0px;height:51.0px;background:#b5cfe0;"></div>
<div class="b" style="left:819.0px;top:705.0px;width:1.0px;height:51.0px;background:#b5cfe0;"></div>
<div class="b" style="left:901.0px;top:705.0px;width:1.0px;height:51.0px;background:#b5cfe0;"></div>
<div class="b" style="left:984.0px;top:705.0px;width:1.0px;height:51.0px;background:#b5cfe0;"></div>
<div class="b" style="left:1066.0px;top:705.0px;width:1.0px;height:51.0px;background:#b5cfe0;"></div>
<div class="b" style="left:1149.0px;top:705.0px;width:1.0px;height:51.0px;background:#b5cfe0;"></div>
<div class="b" style="left:1231.0px;top:705.0px;width:1.0px;height:51.0px;background:#b5cfe0;"></div>
<div class="b" style="left:1314.0px;top:705.0px;width:1.0px;height:51.0px;background:#b5cfe0;"></div>
<div class="b" style="left:1396.0px;top:705.0px;width:1.0px;height:51.0px;background:#b5cfe0;"></div>
<div class="t" style="left:-77.5px;width:200px;text-align:right;top:718.3px;font-size:21px;line-height:21px;font-weight:bold;color:#2b2b2b;letter-spacing:0.4px;text-decoration:underline;text-decoration-thickness:2px;text-underline-offset:1.5px;">Z96</div>
<svg style="left:132px;top:735.4px" width="14" height="8"><path d="M0 0.3 H13 L6.5 7 Z" fill="#1f6fde"/></svg>
<div class="b" style="left:171.8px;top:712.0px;width:16.5px;height:15.5px;background:#d39c4a;border-radius:3px;"></div>
<div class="t" style="left:171.0px;width:18px;text-align:center;top:713.4px;font-size:13px;line-height:13px;color:#fff;font-weight:normal;letter-spacing:0px;text-indent:0px;font-family:'Liberation Sans',sans-serif;">始</div>
<div class="t" style="left:195.0px;top:713.2px;font-size:13.5px;line-height:13.5px;color:#222;font-weight:normal;letter-spacing:2.6px;font-family:'Liberation Sans',sans-serif;">重庆西</div>
<div class="b" style="left:171.8px;top:734.4px;width:16.5px;height:15.5px;background:#3d6f10;border-radius:3px;"></div>
<div class="t" style="left:171.0px;width:18px;text-align:center;top:735.8px;font-size:13px;line-height:13px;color:#fff;font-weight:normal;letter-spacing:0px;text-indent:0px;font-family:'Liberation Sans',sans-serif;">终</div>
<div class="t" style="left:195.0px;top:735.1px;font-size:13.5px;line-height:13.5px;color:#222;font-weight:normal;letter-spacing:2.6px;font-family:'Liberation Sans',sans-serif;">北京西</div>
<div class="t" style="left:297.2px;top:709.2px;font-size:18.5px;line-height:18.5px;color:#222;font-weight:bold;letter-spacing:0.9px;font-family:'Liberation Sans',sans-serif;">11:25</div>
<div class="t" style="left:297.2px;top:732.7px;font-size:18.5px;line-height:18.5px;color:#9a9a9a;font-weight:bold;letter-spacing:0.9px;font-family:'Liberation Sans',sans-serif;">10:51</div>
<div class="t" style="left:392.3px;top:711.5px;font-size:16px;line-height:16px;color:#222;font-weight:bold;letter-spacing:0.6px;font-family:'Liberation Sans',sans-serif;">23:26</div>
<div class="t" style="left:393.0px;top:735.4px;font-size:13.5px;line-height:13.5px;color:#222;font-weight:normal;letter-spacing:1.0px;font-family:'Liberation Sans',sans-serif;">次日到达</div>
<div class="t" style="left:500.5px;width:60px;text-align:center;top:723.9px;font-size:13px;line-height:13px;color:#9a9a9a;font-weight:normal;letter-spacing:0px;text-indent:0px;font-family:'Liberation Sans',sans-serif;">--</div>
<div class="t" style="left:583.0px;width:60px;text-align:center;top:723.9px;font-size:13px;line-height:13px;color:#9a9a9a;font-weight:normal;letter-spacing:0px;text-indent:0px;font-family:'Liberation Sans',sans-serif;">--</div>
<div class="t" style="left:665.5px;width:60px;text-align:center;top:723.9px;font-size:13px;line-height:13px;color:#9a9a9a;font-weight:normal;letter-spacing:0px;text-indent:0px;font-family:'Liberation Sans',sans-serif;">--</div>
<div class="t" style="left:748.0px;width:60px;text-align:center;top:723.9px;font-size:13px;line-height:13px;color:#9a9a9a;font-weight:normal;letter-spacing:0px;text-indent:0px;font-family:'Liberation Sans',sans-serif;">--</div>
<div class="t" style="left:830.5px;width:60px;text-align:center;top:723.4px;font-size:14px;line-height:14px;color:#2e9c26;font-weight:normal;letter-spacing:0px;text-indent:0px;font-family:'Liberation Sans',sans-serif;">有</div>
<div class="t" style="left:913.0px;width:60px;text-align:center;top:723.9px;font-size:13px;line-height:13px;color:#9a9a9a;font-weight:normal;letter-spacing:0px;text-indent:0px;font-family:'Liberation Sans',sans-serif;">--</div>
<div class="t" style="left:995.5px;width:60px;text-align:center;top:723.4px;font-size:14px;line-height:14px;color:#2e9c26;font-weight:normal;letter-spacing:0px;text-indent:0px;font-family:'Liberation Sans',sans-serif;">有</div>
<div class="t" style="left:1078.0px;width:60px;text-align:center;top:723.9px;font-size:13px;line-height:13px;color:#9a9a9a;font-weight:normal;letter-spacing:0px;text-indent:0px;font-family:'Liberation Sans',sans-serif;">--</div>
<div class="t" style="left:1160.5px;width:60px;text-align:center;top:723.4px;font-size:14px;line-height:14px;color:#2e9c26;font-weight:normal;letter-spacing:0px;text-indent:0px;font-family:'Liberation Sans',sans-serif;">有</div>
<div class="t" style="left:1243.0px;width:60px;text-align:center;top:723.4px;font-size:14px;line-height:14px;color:#888;font-weight:normal;letter-spacing:0px;text-indent:0px;font-family:'Liberation Sans',sans-serif;">无</div>
<div class="t" style="left:1325.5px;width:60px;text-align:center;top:723.9px;font-size:13px;line-height:13px;color:#9a9a9a;font-weight:normal;letter-spacing:0px;text-indent:0px;font-family:'Liberation Sans',sans-serif;">--</div>
<div class="b" style="left:1420.0px;top:710.7px;width:90.0px;height:37.7px;background:#0080ff;border-radius:5px;overflow:hidden;"></div>
<div class="t" style="left:1424.6px;width:80px;text-align:center;top:723.0px;font-size:14.5px;line-height:14.5px;color:#fff;font-weight:normal;letter-spacing:0px;text-indent:0px;font-family:'Liberation Sans',sans-serif;">预订</div>
<div class="b" style="left:47.0px;top:756.0px;width:1500.0px;height:50.0px;background:#fff;"></div>
<div class="b" style="left:47.0px;top:806.0px;width:1500.0px;height:1.0px;background:#b5cfe0;"></div>
<div class="b" style="left:489.0px;top:756.0px;width:1.0px;height:51.0px;background:#b5cfe0;"></div>
<div class="b" style="left:571.0px;top:756.0px;width:1.0px;height:51.0px;background:#b5cfe0;"></div>
<div class="b" style="left:654.0px;top:756.0px;width:1.0px;height:51.0px;background:#b5cfe0;"></div>
<div class="b" style="left:736.0px;top:756.0px;width:1.0px;height:51.0px;background:#b5cfe0;"></div>
<div class="b" style="left:819.0px;top:756.0px;width:1.0px;height:51.0px;background:#b5cfe0;"></div>
<div class="b" style="left:901.0px;top:756.0px;width:1.0px;height:51.0px;background:#b5cfe0;"></div>
<div class="b" style="left:984.0px;top:756.0px;width:1.0px;height:51.0px;background:#b5cfe0;"></div>
<div class="b" style="left:1066.0px;top:756.0px;width:1.0px;height:51.0px;background:#b5cfe0;"></div>
<div class="b" style="left:1149.0px;top:756.0px;width:1.0px;height:51.0px;background:#b5cfe0;"></div>
<div class="b" style="left:1231.0px;top:756.0px;width:1.0px;height:51.0px;background:#b5cfe0;"></div>
<div class="b" style="left:1314.0px;top:756.0px;width:1.0px;height:51.0px;background:#b5cfe0;"></div>
<div class="b" style="left:1396.0px;top:756.0px;width:1.0px;height:51.0px;background:#b5cfe0;"></div>
<div class="t" style="left:-77.5px;width:200px;text-align:right;top:769.5px;font-size:21px;line-height:21px;font-weight:bold;color:#2b2b2b;letter-spacing:0.4px;text-decoration:underline;text-decoration-thickness:2px;text-underline-offset:1.5px;">G372</div>
<svg style="left:132px;top:786.6px" width="14" height="8"><path d="M0 0.3 H13 L6.5 7 Z" fill="#1f6fde"/></svg>
<div class="b" style="left:171.8px;top:763.2px;width:16.5px;height:15.5px;background:#6a9ce1;border-radius:3px;"></div>
<div class="t" style="left:171.0px;width:18px;text-align:center;top:764.6px;font-size:13px;line-height:13px;color:#fff;font-weight:normal;letter-spacing:0px;text-indent:0px;font-family:'Liberation Sans',sans-serif;">过</div>
<div class="t" style="left:195.0px;top:764.4px;font-size:13.5px;line-height:13.5px;color:#222;font-weight:normal;letter-spacing:2.6px;font-family:'Liberation Sans',sans-serif;">重庆西</div>
<div class="b" style="left:171.8px;top:785.6px;width:16.5px;height:15.5px;background:#3d6f10;border-radius:3px;"></div>
<div class="t" style="left:171.0px;width:18px;text-align:center;top:787.0px;font-size:13px;line-height:13px;color:#fff;font-weight:normal;letter-spacing:0px;text-indent:0px;font-family:'Liberation Sans',sans-serif;">终</div>
<div class="t" style="left:195.0px;top:786.3px;font-size:13.5px;line-height:13.5px;color:#222;font-weight:normal;letter-spacing:2.6px;font-family:'Liberation Sans',sans-serif;">北京西</div>
<div class="t" style="left:297.2px;top:760.4px;font-size:18.5px;line-height:18.5px;color:#222;font-weight:bold;letter-spacing:0.9px;font-family:'Liberation Sans',sans-serif;">11:57</div>
<div class="t" style="left:297.2px;top:783.9px;font-size:18.5px;line-height:18.5px;color:#9a9a9a;font-weight:bold;letter-spacing:0.9px;font-family:'Liberation Sans',sans-serif;">21:34</div>
<div class="t" style="left:392.3px;top:762.8px;font-size:16px;line-height:16px;color:#222;font-weight:bold;letter-spacing:0.6px;font-family:'Liberation Sans',sans-serif;">09:37</div>
<div class="t" style="left:393.0px;top:786.6px;font-size:13.5px;line-height:13.5px;color:#222;font-weight:normal;letter-spacing:1.0px;font-family:'Liberation Sans',sans-serif;">当日到达</div>
<div class="t" style="left:500.5px;width:60px;text-align:center;top:773.1px;font-size:17px;line-height:17px;color:#222;font-weight:bold;letter-spacing:0px;text-indent:0px;font-family:'Liberation Serif',serif;">2</div>
<div class="t" style="left:583.0px;width:60px;text-align:center;top:773.1px;font-size:17px;line-height:17px;color:#222;font-weight:bold;letter-spacing:0px;text-indent:0px;font-family:'Liberation Serif',serif;">1</div>
<div class="t" style="left:665.5px;width:60px;text-align:center;top:773.1px;font-size:17px;line-height:17px;color:#222;font-weight:bold;letter-spacing:0px;text-indent:0px;font-family:'Liberation Serif',serif;">17</div>
<div class="t" style="left:748.0px;width:60px;text-align:center;top:775.1px;font-size:13px;line-height:13px;color:#9a9a9a;font-weight:normal;letter-spacing:0px;text-indent:0px;font-family:'Liberation Sans',sans-serif;">--</div>
<div class="t" style="left:830.5px;width:60px;text-align:center;top:775.1px;font-size:13px;line-height:13px;color:#9a9a9a;font-weight:normal;letter-spacing:0px;text-indent:0px;font-family:'Liberation Sans',sans-serif;">--</div>
<div class="t" style="left:913.0px;width:60px;text-align:center;top:775.1px;font-size:13px;line-height:13px;color:#9a9a9a;font-weight:normal;letter-spacing:0px;text-indent:0px;font-family:'Liberation Sans',sans-serif;">--</div>
<div class="t" style="left:995.5px;width:60px;text-align:center;top:775.1px;font-size:13px;line-height:13px;color:#9a9a9a;font-weight:normal;letter-spacing:0px;text-indent:0px;font-family:'Liberation Sans',sans-serif;">--</div>
<div class="t" style="left:1078.0px;width:60px;text-align:center;top:775.1px;font-size:13px;line-height:13px;color:#9a9a9a;font-weight:normal;letter-spacing:0px;text-indent:0px;font-family:'Liberation Sans',sans-serif;">--</div>
<div class="t" style="left:1160.5px;width:60px;text-align:center;top:775.1px;font-size:13px;line-height:13px;color:#9a9a9a;font-weight:normal;letter-spacing:0px;text-indent:0px;font-family:'Liberation Sans',sans-serif;">--</div>
<div class="t" style="left:1243.0px;width:60px;text-align:center;top:775.1px;font-size:13px;line-height:13px;color:#9a9a9a;font-weight:normal;letter-spacing:0px;text-indent:0px;font-family:'Liberation Sans',sans-serif;">--</div>
<div class="t" style="left:1325.5px;width:60px;text-align:center;top:775.1px;font-size:13px;line-height:13px;color:#9a9a9a;font-weight:normal;letter-spacing:0px;text-indent:0px;font-family:'Liberation Sans',sans-serif;">--</div>
<div class="b" style="left:1420.0px;top:761.9px;width:90.0px;height:37.7px;background:#0080ff;border-radius:5px;overflow:hidden;"></div>
<svg style="left:1420px;top:761.9px" width="90" height="38"><defs><clipPath id="c5"><rect x="0" y="0" width="90" height="37.7" rx="5"/></clipPath></defs><path d="M61.5 0 H90 V28 Z" fill="#ff7f00" clip-path="url(#c5)"/></svg>
<div class="t" style="left:1494.5px;width:16px;text-align:center;top:764.2px;font-size:12.5px;line-height:12.5px;color:#fff;font-weight:normal;letter-spacing:0px;text-indent:0px;font-family:'Liberation Sans',sans-serif;">兑</div>
<div class="t" style="left:1424.6px;width:80px;text-align:center;top:774.2px;font-size:14.5px;line-height:14.5px;color:#fff;font-weight:normal;letter-spacing:0px;text-indent:0px;font-family:'Liberation Sans',sans-serif;">预订</div>
<div class="b" style="left:47.0px;top:807.0px;width:1500.0px;height:50.0px;background:#eef1f8;"></div>
<div class="b" style="left:47.0px;top:857.0px;width:1500.0px;height:1.0px;background:#b5cfe0;"></div>
<div class="b" style="left:489.0px;top:807.0px;width:1.0px;height:51.0px;background:#b5cfe0;"></div>
<div class="b" style="left:571.0px;top:807.0px;width:1.0px;height:51.0px;background:#b5cfe0;"></div>
<div class="b" style="left:654.0px;top:807.0px;width:1.0px;height:51.0px;background:#b5cfe0;"></div>
<div class="b" style="left:736.0px;top:807.0px;width:1.0px;height:51.0px;background:#b5cfe0;"></div>
<div class="b" style="left:819.0px;top:807.0px;width:1.0px;height:51.0px;background:#b5cfe0;"></div>
<div class="b" style="left:901.0px;top:807.0px;width:1.0px;height:51.0px;background:#b5cfe0;"></div>
<div class="b" style="left:984.0px;top:807.0px;width:1.0px;height:51.0px;background:#b5cfe0;"></div>
<div class="b" style="left:1066.0px;top:807.0px;width:1.0px;height:51.0px;background:#b5cfe0;"></div>
<div class="b" style="left:1149.0px;top:807.0px;width:1.0px;height:51.0px;background:#b5cfe0;"></div>
<div class="b" style="left:1231.0px;top:807.0px;width:1.0px;height:51.0px;background:#b5cfe0;"></div>
<div class="b" style="left:1314.0px;top:807.0px;width:1.0px;height:51.0px;background:#b5cfe0;"></div>
<div class="b" style="left:1396.0px;top:807.0px;width:1.0px;height:51.0px;background:#b5cfe0;"></div>
<div class="t" style="left:-77.5px;width:200px;text-align:right;top:820.8px;font-size:21px;line-height:21px;font-weight:bold;color:#2b2b2b;letter-spacing:0.4px;text-decoration:underline;text-decoration-thickness:2px;text-underline-offset:1.5px;">G372</div>
<svg style="left:132px;top:837.9px" width="14" height="8"><path d="M0 0.3 H13 L6.5 7 Z" fill="#1f6fde"/></svg>
<div class="b" style="left:171.8px;top:814.5px;width:16.5px;height:15.5px;background:#6a9ce1;border-radius:3px;"></div>
<div class="t" style="left:171.0px;width:18px;text-align:center;top:815.9px;font-size:13px;line-height:13px;color:#fff;font-weight:normal;letter-spacing:0px;text-indent:0px;font-family:'Liberation Sans',sans-serif;">过</div>
<div class="t" style="left:195.0px;top:815.6px;font-size:13.5px;line-height:13.5px;color:#222;font-weight:normal;letter-spacing:2.6px;font-family:'Liberation Sans',sans-serif;">重庆北</div>
<div class="b" style="left:171.8px;top:836.9px;width:16.5px;height:15.5px;background:#3d6f10;border-radius:3px;"></div>
<div class="t" style="left:171.0px;width:18px;text-align:center;top:838.3px;font-size:13px;line-height:13px;color:#fff;font-weight:normal;letter-spacing:0px;text-indent:0px;font-family:'Liberation Sans',sans-serif;">终</div>
<div class="t" style="left:195.0px;top:837.5px;font-size:13.5px;line-height:13.5px;color:#222;font-weight:normal;letter-spacing:2.6px;font-family:'Liberation Sans',sans-serif;">北京西</div>
<div class="t" style="left:297.2px;top:811.6px;font-size:18.5px;line-height:18.5px;color:#222;font-weight:bold;letter-spacing:0.9px;font-family:'Liberation Sans',sans-serif;">12:24</div>
<div class="t" style="left:297.2px;top:835.1px;font-size:18.5px;line-height:18.5px;color:#9a9a9a;font-weight:bold;letter-spacing:0.9px;font-family:'Liberation Sans',sans-serif;">21:34</div>
<div class="t" style="left:392.3px;top:814.0px;font-size:16px;line-height:16px;color:#222;font-weight:bold;letter-spacing:0.6px;font-family:'Liberation Sans',sans-serif;">09:10</div>
<div class="t" style="left:393.0px;top:837.8px;font-size:13.5px;line-height:13.5px;color:#222;font-weight:normal;letter-spacing:1.0px;font-family:'Liberation Sans',sans-serif;">当日到达</div>
<div class="t" style="left:500.5px;width:60px;text-align:center;top:824.4px;font-size:17px;line-height:17px;color:#222;font-weight:bold;letter-spacing:0px;text-indent:0px;font-family:'Liberation Serif',serif;">2</div>
<div class="t" style="left:583.0px;width:60px;text-align:center;top:824.4px;font-size:17px;line-height:17px;color:#222;font-weight:bold;letter-spacing:0px;text-indent:0px;font-family:'Liberation Serif',serif;">2</div>
<div class="t" style="left:665.5px;width:60px;text-align:center;top:825.9px;font-size:14px;line-height:14px;color:#2e9c26;font-weight:normal;letter-spacing:0px;text-indent:0px;font-family:'Liberation Sans',sans-serif;">有</div>
<div class="t" style="left:748.0px;width:60px;text-align:center;top:826.4px;font-size:13px;line-height:13px;color:#9a9a9a;font-weight:normal;letter-spacing:0px;text-indent:0px;font-family:'Liberation Sans',sans-serif;">--</div>
<div class="t" style="left:830.5px;width:60px;text-align:center;top:826.4px;font-size:13px;line-height:13px;color:#9a9a9a;font-weight:normal;letter-spacing:0px;text-indent:0px;font-family:'Liberation Sans',sans-serif;">--</div>
<div class="t" style="left:913.0px;width:60px;text-align:center;top:826.4px;font-size:13px;line-height:13px;color:#9a9a9a;font-weight:normal;letter-spacing:0px;text-indent:0px;font-family:'Liberation Sans',sans-serif;">--</div>
<div class="t" style="left:995.5px;width:60px;text-align:center;top:826.4px;font-size:13px;line-height:13px;color:#9a9a9a;font-weight:normal;letter-spacing:0px;text-indent:0px;font-family:'Liberation Sans',sans-serif;">--</div>
<div class="t" style="left:1078.0px;width:60px;text-align:center;top:826.4px;font-size:13px;line-height:13px;color:#9a9a9a;font-weight:normal;letter-spacing:0px;text-indent:0px;font-family:'Liberation Sans',sans-serif;">--</div>
<div class="t" style="left:1160.5px;width:60px;text-align:center;top:826.4px;font-size:13px;line-height:13px;color:#9a9a9a;font-weight:normal;letter-spacing:0px;text-indent:0px;font-family:'Liberation Sans',sans-serif;">--</div>
<div class="t" style="left:1243.0px;width:60px;text-align:center;top:826.4px;font-size:13px;line-height:13px;color:#9a9a9a;font-weight:normal;letter-spacing:0px;text-indent:0px;font-family:'Liberation Sans',sans-serif;">--</div>
<div class="t" style="left:1325.5px;width:60px;text-align:center;top:826.4px;font-size:13px;line-height:13px;color:#9a9a9a;font-weight:normal;letter-spacing:0px;text-indent:0px;font-family:'Liberation Sans',sans-serif;">--</div>
<div class="b" style="left:1420.0px;top:813.2px;width:90.0px;height:37.7px;background:#0080ff;border-radius:5px;overflow:hidden;"></div>
<svg style="left:1420px;top:813.2px" width="90" height="38"><defs><clipPath id="c6"><rect x="0" y="0" width="90" height="37.7" rx="5"/></clipPath></defs><path d="M61.5 0 H90 V28 Z" fill="#ff7f00" clip-path="url(#c6)"/></svg>
<div class="t" style="left:1494.5px;width:16px;text-align:center;top:815.4px;font-size:12.5px;line-height:12.5px;color:#fff;font-weight:normal;letter-spacing:0px;text-indent:0px;font-family:'Liberation Sans',sans-serif;">兑</div>
<div class="t" style="left:1424.6px;width:80px;text-align:center;top:825.4px;font-size:14.5px;line-height:14.5px;color:#fff;font-weight:normal;letter-spacing:0px;text-indent:0px;font-family:'Liberation Sans',sans-serif;">预订</div>
<div class="b" style="left:47.0px;top:858.0px;width:1500.0px;height:51.0px;background:#fff;"></div>
<div class="b" style="left:47.0px;top:909.0px;width:1500.0px;height:1.0px;background:#b5cfe0;"></div>
<div class="b" style="left:489.0px;top:858.0px;width:1.0px;height:52.0px;background:#b5cfe0;"></div>
<div class="b" style="left:571.0px;top:858.0px;width:1.0px;height:52.0px;background:#b5cfe0;"></div>
<div class="b" style="left:654.0px;top:858.0px;width:1.0px;height:52.0px;background:#b5cfe0;"></div>
<div class="b" style="left:736.0px;top:858.0px;width:1.0px;height:52.0px;background:#b5cfe0;"></div>
<div class="b" style="left:819.0px;top:858.0px;width:1.0px;height:52.0px;background:#b5cfe0;"></div>
<div class="b" style="left:901.0px;top:858.0px;width:1.0px;height:52.0px;background:#b5cfe0;"></div>
<div class="b" style="left:984.0px;top:858.0px;width:1.0px;height:52.0px;background:#b5cfe0;"></div>
<div class="b" style="left:1066.0px;top:858.0px;width:1.0px;height:52.0px;background:#b5cfe0;"></div>
<div class="b" style="left:1149.0px;top:858.0px;width:1.0px;height:52.0px;background:#b5cfe0;"></div>
<div class="b" style="left:1231.0px;top:858.0px;width:1.0px;height:52.0px;background:#b5cfe0;"></div>
<div class="b" style="left:1314.0px;top:858.0px;width:1.0px;height:52.0px;background:#b5cfe0;"></div>
<div class="b" style="left:1396.0px;top:858.0px;width:1.0px;height:52.0px;background:#b5cfe0;"></div>
<div class="t" style="left:-77.5px;width:200px;text-align:right;top:872.0px;font-size:21px;line-height:21px;font-weight:bold;color:#2b2b2b;letter-spacing:0.4px;text-decoration:underline;text-decoration-thickness:2px;text-underline-offset:1.5px;">Z50</div>
<svg style="left:132px;top:889.1px" width="14" height="8"><path d="M0 0.3 H13 L6.5 7 Z" fill="#1f6fde"/></svg>
<div class="b" style="left:171.8px;top:865.7px;width:16.5px;height:15.5px;background:#6a9ce1;border-radius:3px;"></div>
<div class="t" style="left:171.0px;width:18px;text-align:center;top:867.1px;font-size:13px;line-height:13px;color:#fff;font-weight:normal;letter-spacing:0px;text-indent:0px;font-family:'Liberation Sans',sans-serif;">过</div>
<div class="t" style="left:195.0px;top:866.9px;font-size:13.5px;line-height:13.5px;color:#222;font-weight:normal;letter-spacing:2.6px;font-family:'Liberation Sans',sans-serif;">重庆北</div>
<div class="b" style="left:171.8px;top:888.1px;width:16.5px;height:15.5px;background:#3d6f10;border-radius:3px;"></div>
<div class="t" style="left:171.0px;width:18px;text-align:center;top:889.5px;font-size:13px;line-height:13px;color:#fff;font-weight:normal;letter-spacing:0px;text-indent:0px;font-family:'Liberation Sans',sans-serif;">终</div>
<div class="t" style="left:195.0px;top:888.8px;font-size:13.5px;line-height:13.5px;color:#222;font-weight:normal;letter-spacing:2.6px;font-family:'Liberation Sans',sans-serif;">北京西</div>
<div class="t" style="left:297.2px;top:862.9px;font-size:18.5px;line-height:18.5px;color:#222;font-weight:bold;letter-spacing:0.9px;font-family:'Liberation Sans',sans-serif;">14:37</div>
<div class="t" style="left:297.2px;top:886.4px;font-size:18.5px;line-height:18.5px;color:#9a9a9a;font-weight:bold;letter-spacing:0.9px;font-family:'Liberation Sans',sans-serif;">08:11</div>
<div class="t" style="left:392.3px;top:865.2px;font-size:16px;line-height:16px;color:#222;font-weight:bold;letter-spacing:0.6px;font-family:'Liberation Sans',sans-serif;">19:28</div>
<div class="t" style="left:393.0px;top:889.1px;font-size:13.5px;line-height:13.5px;color:#222;font-weight:normal;letter-spacing:1.0px;font-family:'Liberation Sans',sans-serif;">次日到达</div>
<div class="t" style="left:500.5px;width:60px;text-align:center;top:877.6px;font-size:13px;line-height:13px;color:#9a9a9a;font-weight:normal;letter-spacing:0px;text-indent:0px;font-family:'Liberation Sans',sans-serif;">--</div>
<div class="t" style="left:583.0px;width:60px;text-align:center;top:877.6px;font-size:13px;line-height:13px;color:#9a9a9a;font-weight:normal;letter-spacing:0px;text-indent:0px;font-family:'Liberation Sans',sans-serif;">--</div>
<div class="t" style="left:665.5px;width:60px;text-align:center;top:877.6px;font-size:13px;line-height:13px;color:#9a9a9a;font-weight:normal;letter-spacing:0px;text-indent:0px;font-family:'Liberation Sans',sans-serif;">--</div>
<div class="t" style="left:748.0px;width:60px;text-align:center;top:877.6px;font-size:13px;line-height:13px;color:#9a9a9a;font-weight:normal;letter-spacing:0px;text-indent:0px;font-family:'Liberation Sans',sans-serif;">--</div>
<div class="t" style="left:830.5px;width:60px;text-align:center;top:877.6px;font-size:13px;line-height:13px;color:#9a9a9a;font-weight:normal;letter-spacing:0px;text-indent:0px;font-family:'Liberation Sans',sans-serif;">--</div>
<div class="t" style="left:913.0px;width:60px;text-align:center;top:877.6px;font-size:13px;line-height:13px;color:#9a9a9a;font-weight:normal;letter-spacing:0px;text-indent:0px;font-family:'Liberation Sans',sans-serif;">--</div>
<div class="t" style="left:995.5px;width:60px;text-align:center;top:877.6px;font-size:13px;line-height:13px;color:#9a9a9a;font-weight:normal;letter-spacing:0px;text-indent:0px;font-family:'Liberation Sans',sans-serif;">--</div>
<div class="t" style="left:1078.0px;width:60px;text-align:center;top:877.6px;font-size:13px;line-height:13px;color:#9a9a9a;font-weight:normal;letter-spacing:0px;text-indent:0px;font-family:'Liberation Sans',sans-serif;">--</div>
<div class="t" style="left:1160.5px;width:60px;text-align:center;top:877.6px;font-size:13px;line-height:13px;color:#9a9a9a;font-weight:normal;letter-spacing:0px;text-indent:0px;font-family:'Liberation Sans',sans-serif;">--</div>
<div class="t" style="left:1243.0px;width:60px;text-align:center;top:877.6px;font-size:13px;line-height:13px;color:#9a9a9a;font-weight:normal;letter-spacing:0px;text-indent:0px;font-family:'Liberation Sans',sans-serif;">--</div>
<div class="t" style="left:1325.5px;width:60px;text-align:center;top:877.6px;font-size:13px;line-height:13px;color:#9a9a9a;font-weight:normal;letter-spacing:0px;text-indent:0px;font-family:'Liberation Sans',sans-serif;">--</div>
<div class="b" style="left:1420.0px;top:864.4px;width:90.0px;height:37.7px;background:#0080ff;border-radius:5px;overflow:hidden;"></div>
<svg style="left:1420px;top:864.4px" width="90" height="38"><defs><clipPath id="c7"><rect x="0" y="0" width="90" height="37.7" rx="5"/></clipPath></defs><path d="M61.5 0 H90 V28 Z" fill="#ff7f00" clip-path="url(#c7)"/></svg>
<div class="t" style="left:1494.5px;width:16px;text-align:center;top:866.7px;font-size:12.5px;line-height:12.5px;color:#fff;font-weight:normal;letter-spacing:0px;text-indent:0px;font-family:'Liberation Sans',sans-serif;">兑</div>
<div class="t" style="left:1424.6px;width:80px;text-align:center;top:876.7px;font-size:14.5px;line-height:14.5px;color:#fff;font-weight:normal;letter-spacing:0px;text-indent:0px;font-family:'Liberation Sans',sans-serif;">预订</div>
</body></html>
